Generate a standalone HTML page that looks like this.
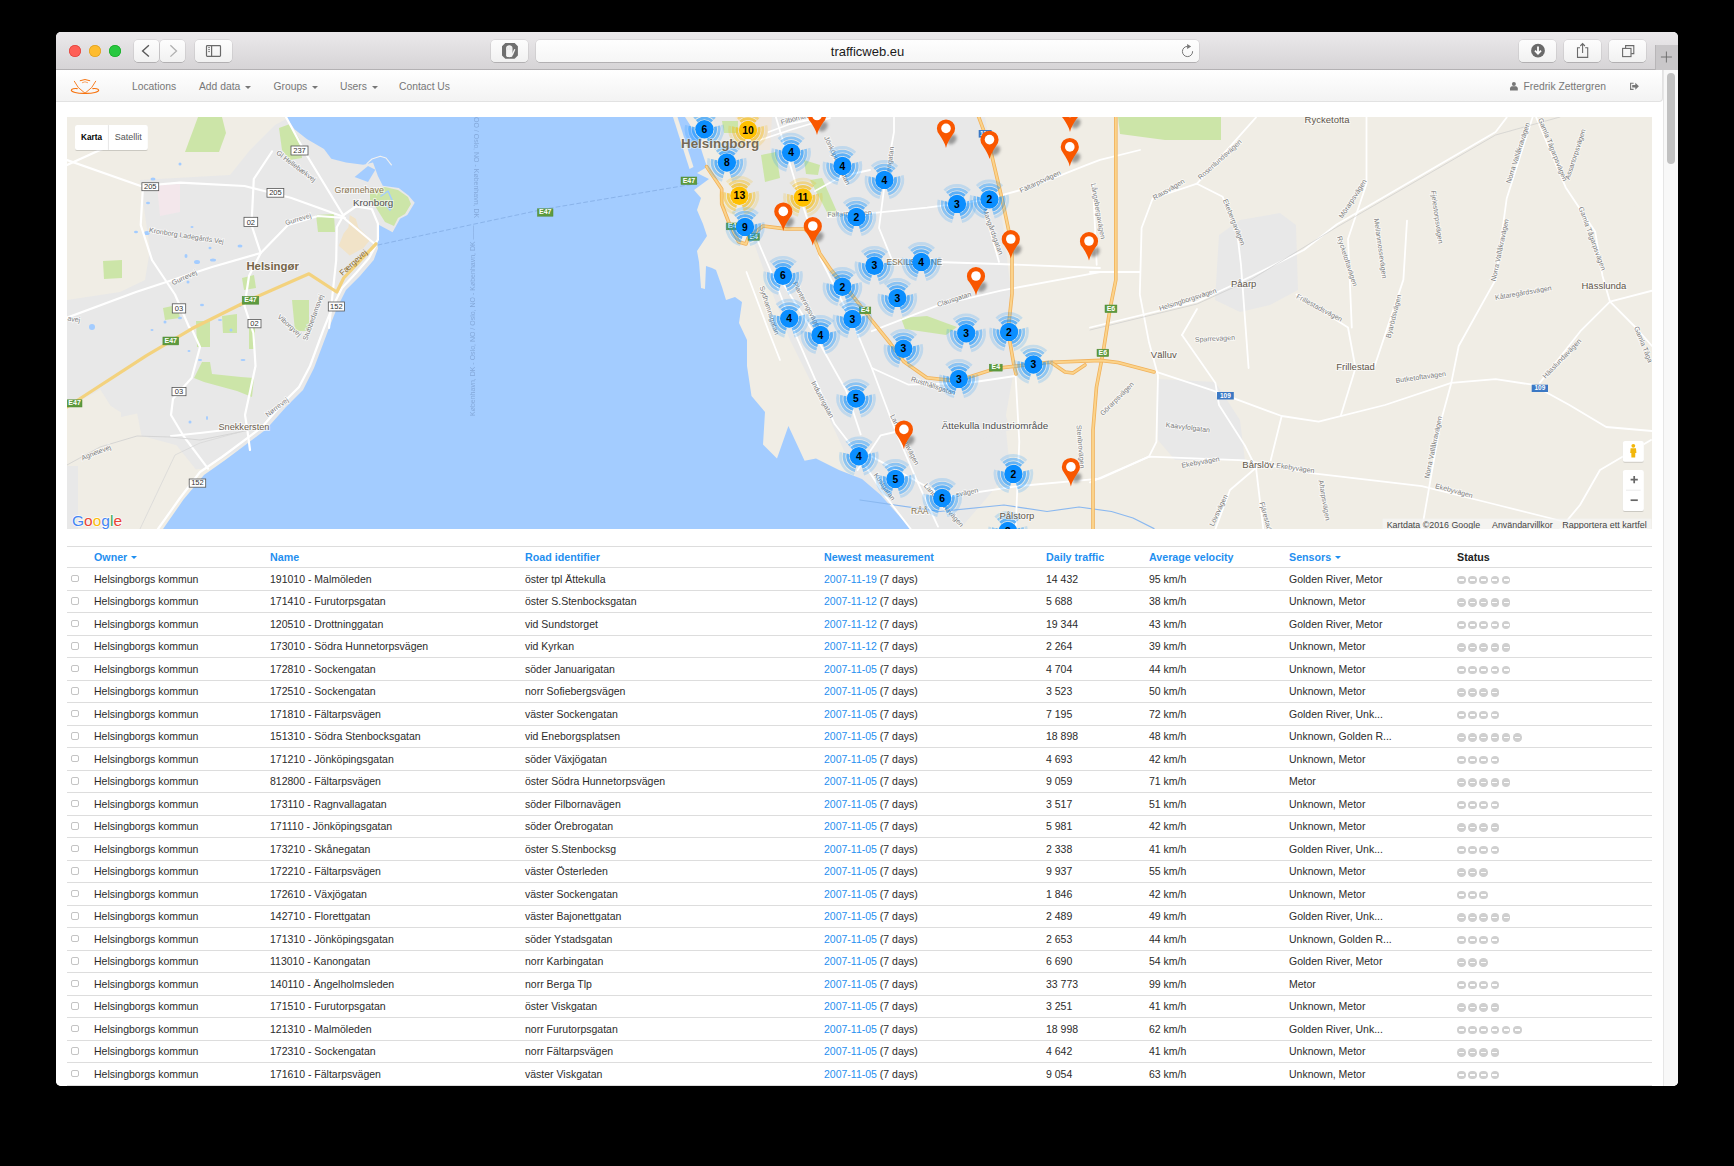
<!DOCTYPE html>
<html><head><meta charset="utf-8"><style>html,body{margin:0;padding:0;background:#000;width:1734px;height:1166px;overflow:hidden;font-family:"Liberation Sans",sans-serif;}
#win{position:absolute;left:56px;top:32px;width:1622px;height:1053.5px;background:#fff;border-radius:5px 5px 5px 5px;overflow:hidden;}
#toolbar{position:absolute;left:0;top:0;width:1622px;height:37.5px;background:linear-gradient(#ebe9eb,#d6d4d6);border-bottom:1px solid #b3b1b3;box-sizing:border-box;}
.tl{position:absolute;top:12.5px;width:12px;height:12px;border-radius:50%;}
.btn{position:absolute;top:7.8px;height:22px;background:linear-gradient(#fdfdfd,#f1f1f1);border-radius:4px;box-shadow:0 0.5px 0.5px rgba(0,0,0,.25),0 0 0 0.5px rgba(0,0,0,.12);box-sizing:border-box;}
#url{position:absolute;left:480px;top:7.8px;width:663px;height:22px;background:linear-gradient(#fefefe,#f6f6f6);border-radius:4px;box-shadow:0 0.5px 0.5px rgba(0,0,0,.25),0 0 0 0.5px rgba(0,0,0,.12);font-size:13px;color:#1a1a1a;text-align:center;line-height:23.6px;}
#newtab{position:absolute;left:1599px;top:13px;width:23px;height:24.5px;background:#c9c7c9;border-left:1px solid #b8b6b8;box-sizing:border-box;}
#content{position:absolute;left:0;top:38px;width:1622px;height:1016px;background:#fff;}
#navbar{position:absolute;left:0;top:0;width:1606.5px;height:31.5px;background:linear-gradient(#fff,#f3f3f3);border:1px solid #e2e2e2;border-top:none;border-left:none;border-radius:0 0 4px 0;box-sizing:border-box;font-size:10.3px;color:#777;}
#navbar .ni{position:absolute;top:11.3px;white-space:nowrap;}
.caretn{display:inline-block;width:0;height:0;border-left:3px solid transparent;border-right:3px solid transparent;border-top:3px solid #777;vertical-align:middle;margin-left:5px;}
#sb{position:absolute;left:1607px;top:0;width:15px;height:1016px;background:#f8f8f8;border-left:1px solid #e6e6e6;box-sizing:border-box;}
#thumb{position:absolute;left:2.8px;top:3px;width:8px;height:90.5px;border-radius:4px;background:#c1c1c1;}
#map{position:absolute;left:11px;top:47px;width:1585px;height:412px;background:#f0ede5;overflow:hidden;}
#map svg{position:absolute;left:0;top:0;}
#table{position:absolute;left:11px;top:0;width:1585px;height:1016px;font-size:10.5px;color:#2b2b2b;}
.thead{position:absolute;left:0;top:475.5px;width:1585px;height:22px;border-top:1px solid #ddd;border-bottom:1px solid #ddd;box-sizing:border-box;}
.tr{position:absolute;left:0;width:1585px;height:22.5px;border-bottom:1px solid #ddd;box-sizing:border-box;}
.c{position:absolute;top:4.7px;white-space:nowrap;}
.h{color:#1f8ff0;font-weight:bold;top:4px;font-size:10.7px;}
.st{color:#222;}
.c1{left:27px}.c2{left:203px}.c3{left:458px}.c4{left:757px}.c5{left:979px}.c6{left:1082px}.c7{left:1222px}.c8{left:1390px}
.c4 a{color:#1f8ff0;}
.cb{position:absolute;left:4px;top:6.6px;width:7.8px;height:7.8px;border:1px solid #c4c4c4;border-radius:2px;box-sizing:border-box;}
.caret{display:inline-block;width:0;height:0;border-left:3px solid transparent;border-right:3px solid transparent;border-top:3px solid #1f8ff0;vertical-align:middle;margin-left:1px;}
.dot{display:inline-block;width:8.6px;height:8.6px;border-radius:50%;background:#cfcfcf;margin-right:2.6px;position:relative;vertical-align:middle;}
.dot:after{content:"";position:absolute;left:1.8px;top:3.6px;width:5px;height:1.4px;background:#fff;}
</style></head>
<body>
<div id="win">
<div id="toolbar">
<div class="tl" style="left:13px;background:#fe5f57;box-shadow:inset 0 0 0 0.7px #e0443e"></div>
<div class="tl" style="left:33px;background:#febc2e;box-shadow:inset 0 0 0 0.7px #dea123"></div>
<div class="tl" style="left:53px;background:#28c840;box-shadow:inset 0 0 0 0.7px #1aab29"></div>
<div class="btn" style="left:78px;width:25px"></div>
<div class="btn" style="left:103.8px;width:25.2px"></div>
<div class="btn" style="left:139px;width:37px"></div>
<div class="btn" style="left:434.7px;width:37.3px"></div>
<div id="url">trafficweb.eu</div>
<div class="btn" style="left:1462.8px;width:37.2px"></div>
<div class="btn" style="left:1507.7px;width:37px"></div>
<div class="btn" style="left:1552.5px;width:37.3px"></div>
<div id="newtab"></div>
<svg style="position:absolute;left:0;top:0" width="1622" height="38" viewBox="56 32 1622 38">
<polyline points="148.9,45.3 142.6,50.9 148.9,56.6" fill="none" stroke="#5a5a5a" stroke-width="1.4"/>
<polyline points="170.4,45.3 176.5,50.9 170.4,56.6" fill="none" stroke="#b0b0b0" stroke-width="1.3"/>
<rect x="206.5" y="45.6" width="14" height="10.8" rx="0.8" fill="none" stroke="#6a6a6a" stroke-width="1.2"/>
<line x1="211.6" y1="45.6" x2="211.6" y2="56.4" stroke="#6a6a6a" stroke-width="1.2"/>
<line x1="208.2" y1="47.6" x2="209.9" y2="47.6" stroke="#6a6a6a" stroke-width="0.9"/>
<line x1="208.2" y1="49.6" x2="209.9" y2="49.6" stroke="#6a6a6a" stroke-width="0.9"/>
<line x1="208.2" y1="51.6" x2="209.9" y2="51.6" stroke="#6a6a6a" stroke-width="0.9"/>
<polygon points="505.3,42.9 514.6,42.9 517.9,46.2 517.9,55.5 514.6,58.8 505.3,58.8 502,55.5 502,46.2" fill="#6f6f6f"/>
<path d="M506.1,56 L506.1,48 C506.1,44.2 512.5,44.2 512.5,48 L512.5,56 C511.8,57.6 506.8,57.6 506.1,56 Z" fill="#f4f4f4"/><path d="M511.6,54.5 L514.2,49 L515.4,49.6 L512.8,55.6 Z" fill="#f4f4f4"/><path d="M507.6,47.2 L507.6,50 M509.3,46.3 L509.3,50 M511,47.2 L511,50" stroke="#d8d8d8" stroke-width="0.5"/>
<circle cx="1538" cy="50.7" r="6.9" fill="#6a6a6a"/>
<path d="M1538,46.5 L1538,53.5 M1535,50.7 L1538,53.8 L1541,50.7" fill="none" stroke="#fff" stroke-width="1.8" stroke-linecap="butt"/>
<path d="M1580,47.8 L1577.5,47.8 L1577.5,57.4 L1587.7,57.4 L1587.7,47.8 L1585.2,47.8" fill="none" stroke="#6a6a6a" stroke-width="1.1"/>
<path d="M1582.6,53 L1582.6,43.8 M1580.3,46 L1582.6,43.6 L1584.9,46" fill="none" stroke="#6a6a6a" stroke-width="1.1"/>
<path d="M1625.6,48 L1625.6,45.6 L1633.8,45.6 L1633.8,53.6 L1631.2,53.6" fill="none" stroke="#6a6a6a" stroke-width="1.1"/>
<rect x="1622.6" y="48.4" width="8.4" height="8.2" fill="none" stroke="#6a6a6a" stroke-width="1.1"/>
<path d="M1666.4,51.5 L1666.4,62.5 M1660.9,57 L1671.9,57" stroke="#6a6a6a" stroke-width="0.9"/>
<path d="M1187.6,46.4 A5.1,5.1 0 1 0 1192.6,51.2" fill="none" stroke="#777" stroke-width="1"/>
<path d="M1187.1,44 L1191.2,46.5 L1187.1,49 Z" fill="#777"/>
</svg>
</div>

<div id="content">
<div id="navbar">
<div class="ni" style="left:76px">Locations</div>
<div class="ni" style="left:143px">Add data<b class="caretn"></b></div>
<div class="ni" style="left:217.5px">Groups<b class="caretn"></b></div>
<div class="ni" style="left:284px">Users<b class="caretn"></b></div>
<div class="ni" style="left:343px">Contact Us</div>
<div class="ni" style="left:1467.5px">Fredrik Zettergren</div>
<svg style="position:absolute;left:0;top:0" width="1606" height="32" viewBox="56 70 1606 32">
<g fill="none" stroke="#f7730e" stroke-linecap="round">
<path d="M85,93.4 C77,93.6 71.2,91.8 71.3,90.3 C71.4,88.9 74.5,88.2 77.2,88.6" stroke-width="1.1"/>
<path d="M85,93.4 C93,93.6 98.8,91.8 98.7,90.3 C98.6,88.9 95.5,88.2 92.8,88.6" stroke-width="1.1"/>
<path d="M74.3,81.3 Q77,88 85,93.2 Q93,88 95.7,81.3" stroke-width="0.9"/>
<path d="M80.2,80.6 Q85,78.3 89.8,80.6" stroke-width="1"/>
<path d="M82.3,82.6 Q85,80.8 87.7,82.6" stroke-width="0.8" opacity="0.8"/>
</g>
<circle cx="1513.9" cy="84.1" r="2" fill="#777"/>
<path d="M1510,90.4 L1510,88.6 C1510,86.8 1511.5,86.3 1512.6,86.3 L1515.2,86.3 C1516.3,86.3 1517.8,86.8 1517.8,88.6 L1517.8,90.4 Z" fill="#777"/>
<path d="M1633.6,83.2 L1630.6,83.2 L1630.6,89.4 L1633.6,89.4" fill="none" stroke="#777" stroke-width="1.1"/>
<path d="M1632.2,85.1 L1635.3,85.1 L1635.3,82.8 L1638.9,86.3 L1635.3,89.8 L1635.3,87.5 L1632.2,87.5 Z" fill="#777"/>
</svg>
</div>
<div id="sb"><div id="thumb"></div></div>

<div id="map"><svg width="1585" height="412" viewBox="0 0 1585 412"><defs><filter id="blur" x="-50%" y="-50%" width="200%" height="200%"><feGaussianBlur stdDeviation="1.5"/></filter><filter id="sh" x="-20%" y="-20%" width="140%" height="150%"><feDropShadow dx="0" dy="0.5" stdDeviation="0.7" flood-color="#000" flood-opacity="0.3"/></filter></defs><g transform="translate(-67,-117)"><polygon points="140,180 230,175 250,150 275,125 290,117 340,117 380,160 420,200 390,245 329,338 303,390 281,420 259,438 233,453 207,468 175,472 150,455 120,440 67,420 67,300 120,292 145,280 150,250" fill="#e8e8e8" />
<polygon points="67,408 100.3,389.4 110.6,405.7 121,412.6 121,416.9 137.2,413.4 141.5,435.7 176.6,445.2 199.8,474.3 215,490 175,529 67,529" fill="#f0ede5" />
<polygon points="67,466 78,466 78,529 67,529" fill="#e8e8e8" />
<polygon points="712,117 985,117 1000,200 1012,300 1014,370 1005,420 1010,470 985,500 960,529 880,529 830,420 790,340 760,260 735,190" fill="#e8e8e8" />
<polygon points="960,395 1000,395 1010,430 980,440 955,420" fill="#e8e8e8" />
<polygon points="735,117 772,117 770,150 745,150" fill="#efe6dc" />
<polygon points="1219,235 1240,220 1280,213 1296,225 1298,290 1270,305 1240,312 1215,300" fill="#e8e8e8" />
<polygon points="1158,379 1215,382 1240,420 1245,460 1175,460 1158,440" fill="#e8e8e8" />
<polygon points="972,383 1004,383 1004,419 972,419" fill="#e8e8e8" />
<polygon points="961,441 1004,441 1004,484 961,484" fill="#e8e8e8" />
<polygon points="1570,160 1640,150 1652,200 1600,220 1570,200" fill="#f0ede5" />
<polygon points="198,117 222,117 226,133 219,152 185,152" fill="#cce5a8" />
<polygon points="279,128 290,124 300,140 302,158 290,160 282,150" fill="#cce5a8" />
<polygon points="370,190 385,187 398,190 408,197 411,204 405,214 398,218 394,226 385,222 375,206 370,200" fill="#cce5a8" />
<polygon points="316,215 334,214 335,232 318,232" fill="#cce5a8" />
<polygon points="103,261 122,260 122,278 104,279" fill="#cce5a8" />
<polygon points="196,321 210,321 210,347 197,347" fill="#cce5a8" />
<polygon points="222,316 237,314 237,333 223,333" fill="#cce5a8" />
<polygon points="249,327 255,327 255,349 249,349" fill="#cce5a8" />
<polygon points="202,362 210,362 212,374 241,377 254,378 252,397 237,391 204,382 194,378" fill="#cce5a8" />
<polygon points="292,300 309,300 309,331 295,331" fill="#cce5a8" />
<polygon points="163,308 177,305 180,318 165,320" fill="#cce5a8" />
<polygon points="242,278 254,275 256,288 244,290" fill="#cce5a8" />
<ellipse cx="180" cy="164" rx="1.5" ry="1.5" fill="#a3ccff"/>
<ellipse cx="153" cy="179" rx="2.5" ry="1.5" fill="#a3ccff"/>
<ellipse cx="148" cy="203" rx="2" ry="1.2" fill="#a3ccff"/>
<ellipse cx="147" cy="233" rx="2.8" ry="2" fill="#a3ccff"/>
<ellipse cx="136" cy="232" rx="2" ry="1.2" fill="#a3ccff"/>
<ellipse cx="192" cy="227" rx="1.5" ry="1" fill="#a3ccff"/>
<ellipse cx="197" cy="262" rx="3" ry="2" fill="#a3ccff"/>
<ellipse cx="186" cy="256" rx="1.5" ry="2" fill="#a3ccff"/>
<ellipse cx="210" cy="248" rx="1.5" ry="1.2" fill="#a3ccff"/>
<ellipse cx="240" cy="246" rx="2.5" ry="1.5" fill="#a3ccff"/>
<ellipse cx="213" cy="260" rx="3" ry="1.5" fill="#a3ccff"/>
<ellipse cx="188" cy="282" rx="1.5" ry="1.5" fill="#a3ccff"/>
<ellipse cx="240" cy="306" rx="1.5" ry="1" fill="#a3ccff"/>
<ellipse cx="202" cy="305" rx="2" ry="1.3" fill="#a3ccff"/>
<ellipse cx="180" cy="318" rx="2" ry="1.3" fill="#a3ccff"/>
<ellipse cx="165" cy="322" rx="1.5" ry="1.5" fill="#a3ccff"/>
<ellipse cx="152" cy="330" rx="1.5" ry="1" fill="#a3ccff"/>
<ellipse cx="92" cy="327" rx="3" ry="3" fill="#a3ccff"/>
<ellipse cx="207" cy="418" rx="1" ry="2" fill="#a3ccff"/>
<ellipse cx="190" cy="422" rx="1.5" ry="1.5" fill="#a3ccff"/>
<ellipse cx="231" cy="330" rx="1.5" ry="1.5" fill="#a3ccff"/>
<ellipse cx="220" cy="320" rx="2" ry="1" fill="#a3ccff"/>
<ellipse cx="243" cy="360" rx="2.5" ry="1" fill="#a3ccff"/>
<ellipse cx="189" cy="351" rx="1.5" ry="1" fill="#a3ccff"/>
<ellipse cx="200" cy="360" rx="2" ry="1" fill="#a3ccff"/>
<polygon points="349.7,215 355.8,218.8 358.3,227.3 365.6,234.7 370.5,239.6 363.2,248.2 349.7,255.6 338.7,245.7 343.6,233.5 348.5,227.3" fill="#f1e3c8" />
<polygon points="157,185 180,184 180,212 160,216" fill="#f3e7eb" />
<polygon points="761,155 776,152 780,178 765,182" fill="#cce5a8" />
<polygon points="804,160 820,165 818,175 806,174" fill="#cce5a8" />
<polygon points="810,180 822,178 838,214 830,218" fill="#cce5a8" />
<polygon points="722,121 738,121 738,133 724,133" fill="#cce5a8" />
<polygon points="1118,117 1221,117 1221,140 1165,140 1120,134" fill="#cce5a8" />
<polygon points="901,318 927,316 957,327 946,335 905,329" fill="#cce5a8" />
<polygon points="286,117 294.5,129.3 306.8,139 324,148.9 331.3,158.7 346,162.4 363.2,164.8 373,162.4 377.9,175.9 382.8,185.7 398.7,188.1 408.5,195.5 414.7,202.8 407.3,215.1 400,218.8 392.6,232.3 379.1,224.9 379.1,237.2 376.7,240.8 378,248.4 373.7,260 360,276 346,290 337,308 328.7,329 314,368 303,390 286,407 266,429.6 224.6,460.5 204,475 183.5,499.6 163,529 910.7,529 880.7,495 862,479 839,470 816,458.4 804.6,460.7 788.4,426 777,458.4 763,444.6 765,412 751.5,396 747,366 747,340 739,323 742,302 735,297 726,300 722,287 716,270 712,268 706,266 705,289 701,288 699,262 697,251 707,236 703,224 697,210 701,198 694,190 709,179 697,173 707,167 703,155 697,136 685,117" fill="#a3ccff" />
<polygon points="673,117 677.5,117 693.5,167 689.5,169" fill="#f0ede5" />
<polygon points="354.6,177 368,166 375.4,169.7 368,182" fill="#a3ccff" />
<polyline points="366.9,163.6 372,159 380.3,156.2 386,158 391.4,164.8" fill="none" stroke="#f0f0f0" stroke-width="1.2" stroke-linejoin="round" stroke-linecap="round" />
<polyline points="381,196 388,191 392,200 390,210 386,205" fill="none" stroke="#a3ccff" stroke-width="1.5" stroke-linejoin="round" stroke-linecap="round" />
<polyline points="378,245 470,225 545,209 700,183" fill="none" stroke="#7fa8e0" stroke-width="1" stroke-linejoin="round" stroke-linecap="round" stroke-dasharray="4,3" opacity="0.7"/>
<polyline points="67,160 140.7,186 180,182.7 244.5,186 290.7,197.7 341.4,216 376,245" fill="none" stroke="#ffffff" stroke-width="2.2" stroke-linejoin="round" stroke-linecap="round" />
<polyline points="143,186 140.7,225 152,260 175,294.5 189,327 191.7,328.8 200,347 191.7,378 173,398.8 171,415 183.5,436 208,468.7" fill="none" stroke="#ffffff" stroke-width="2.2" stroke-linejoin="round" stroke-linecap="round" />
<polyline points="272,151.5 253.8,179 251.5,225 260.7,253 249,276 244.5,306 253.4,333 255.5,366 245,415 247,427.6 250,450" fill="none" stroke="#ffffff" stroke-width="2.2" stroke-linejoin="round" stroke-linecap="round" />
<polyline points="67,317.6 136,292 212,267 260.7,253 288,225 318,216 345,218" fill="none" stroke="#ffffff" stroke-width="2.2" stroke-linejoin="round" stroke-linecap="round" />
<polyline points="286,117 304.5,151.5 343.7,216" fill="none" stroke="#ffffff" stroke-width="2.2" stroke-linejoin="round" stroke-linecap="round" />
<polyline points="329,328 333,290 336.2,260 336.8,227.3 343.6,215 355.8,206.5 371.8,209 377.9,223.7 377.9,239.6 370.5,251.9" fill="none" stroke="#ffffff" stroke-width="2.2" stroke-linejoin="round" stroke-linecap="round" />
<polyline points="158,529 180,498 200,472 222,457 262,427 282,404 299,387 310,366 324,328 333,306 342,288 356,273 369,258 376,245" fill="none" stroke="#ffffff" stroke-width="2.2" stroke-linejoin="round" stroke-linecap="round" />
<polyline points="67,165 100,150 130,140" fill="none" stroke="#ffffff" stroke-width="2.2" stroke-linejoin="round" stroke-linecap="round" />
<polyline points="171,436 200,433 250,427" fill="none" stroke="#ffffff" stroke-width="2.2" stroke-linejoin="round" stroke-linecap="round" />
<polyline points="860,500 940,511.5 1004,505 1047,511.5 1079,507 1111.5,511.5 1133,518 1154,528.6" fill="none" stroke="#8ab8f0" stroke-width="1.2" stroke-linejoin="round" stroke-linecap="round" />
<polyline points="67,465 100,447 137,436 170,437 200,440 260,428" fill="none" stroke="#cfcfcf" stroke-width="0.8" stroke-linejoin="round" stroke-linecap="round" />
<polyline points="140,529 175,455 200,443 240,432" fill="none" stroke="#d5d5d5" stroke-width="0.7" stroke-linejoin="round" stroke-linecap="round" />
<polyline points="67.2,407 146.4,355.6 191.7,328.8 251.5,299 309,273.8 336.8,292 343.7,278 376,243.8" fill="none" stroke="#f3d27e" stroke-width="3.2" stroke-linejoin="round" stroke-linecap="round" />
<polyline points="827.6,217 871.8,213.2 927,207.7 982.4,200.3 1030.3,187.4 1085.6,165.3 1100,159.8 1140,150" fill="none" stroke="#ffffff" stroke-width="1.8" stroke-linejoin="round" stroke-linecap="round" />
<polyline points="768.6,132 790,124 820,117.4" fill="none" stroke="#ffffff" stroke-width="1.8" stroke-linejoin="round" stroke-linecap="round" />
<polyline points="815,191 842,176 870,170" fill="none" stroke="#ffffff" stroke-width="1.8" stroke-linejoin="round" stroke-linecap="round" />
<polyline points="936,262 999,264 1100,268" fill="none" stroke="#ffffff" stroke-width="1.8" stroke-linejoin="round" stroke-linecap="round" />
<polyline points="982,205 990,230 999,262" fill="none" stroke="#ffffff" stroke-width="1.8" stroke-linejoin="round" stroke-linecap="round" />
<polyline points="760,140 790,130 830,118" fill="none" stroke="#ffffff" stroke-width="1.8" stroke-linejoin="round" stroke-linecap="round" />
<polyline points="894,117 894,132 884.7,183.7 879,228 894,264.8" fill="none" stroke="#ffffff" stroke-width="1.8" stroke-linejoin="round" stroke-linecap="round" />
<polyline points="871.8,331.2 938,305.4 1000.8,290.6 1100,272.2 1139.8,272" fill="none" stroke="#ffffff" stroke-width="1.8" stroke-linejoin="round" stroke-linecap="round" />
<polyline points="871.8,368 908.7,384.7 968,383 1015,376" fill="none" stroke="#ffffff" stroke-width="1.8" stroke-linejoin="round" stroke-linecap="round" />
<polyline points="871.8,456.6 945.5,497 1019.3,486 1100,478.7 1149,456.6" fill="none" stroke="#ffffff" stroke-width="1.8" stroke-linejoin="round" stroke-linecap="round" />
<polyline points="776,117.4 798,191 820,257.5 853.4,323.8 871.8,368 894,427 916,478.7 938,526.6" fill="none" stroke="#ffffff" stroke-width="1.8" stroke-linejoin="round" stroke-linecap="round" />
<polyline points="753.8,231.7 776,283.3 795.3,333.8 834.5,423.8 857.6,453.8 883,493 910.7,529" fill="none" stroke="#ffffff" stroke-width="1.8" stroke-linejoin="round" stroke-linecap="round" />
<polyline points="776,272 812.8,331.2 846,390.2 860.7,434.4" fill="none" stroke="#ffffff" stroke-width="1.8" stroke-linejoin="round" stroke-linecap="round" />
<polyline points="1015.6,375.4 1019.3,441.8 1015.6,529" fill="none" stroke="#ffffff" stroke-width="1.8" stroke-linejoin="round" stroke-linecap="round" />
<polyline points="746.5,272 768.6,331 780,360" fill="none" stroke="#ffffff" stroke-width="1.8" stroke-linejoin="round" stroke-linecap="round" />
<polyline points="857.6,470 880.7,435.3 895,432" fill="none" stroke="#ffffff" stroke-width="1.8" stroke-linejoin="round" stroke-linecap="round" />
<polyline points="1093,183.7 1096.7,264.8" fill="none" stroke="#ffffff" stroke-width="1.8" stroke-linejoin="round" stroke-linecap="round" />
<polyline points="1197,183.7 1152.7,198.5 1141.6,228 1139.8,294.4 1149,342.3 1158,375.5 1156.4,441.9 1149,456.6" fill="none" stroke="#ffffff" stroke-width="1.8" stroke-linejoin="round" stroke-linecap="round" />
<polyline points="1197,183.7 1256,117.4" fill="none" stroke="#ffffff" stroke-width="1.8" stroke-linejoin="round" stroke-linecap="round" />
<polyline points="1197,183.7 1222.7,196.7 1237.5,235.4 1241,265 1248.6,368" fill="none" stroke="#ffffff" stroke-width="1.8" stroke-linejoin="round" stroke-linecap="round" />
<polyline points="1090,327.5 1197,301.7 1252,276 1303.9,250 1337,224.3 1495.6,132 1506.7,117.4" fill="none" stroke="#ffffff" stroke-width="1.8" stroke-linejoin="round" stroke-linecap="round" />
<polyline points="1182,335 1215.4,382.9 1219,405 1244.9,445.5 1256,467.7" fill="none" stroke="#ffffff" stroke-width="1.8" stroke-linejoin="round" stroke-linecap="round" />
<polyline points="1182,335 1197,309" fill="none" stroke="#ffffff" stroke-width="1.8" stroke-linejoin="round" stroke-linecap="round" />
<polyline points="1156.4,371.8 1211.7,390.2 1281.7,416 1318.6,421.6 1385,405 1451.3,382.9 1495.6,379.2 1532.5,384.7 1569.4,405 1606.2,427 1652,431" fill="none" stroke="#ffffff" stroke-width="1.8" stroke-linejoin="round" stroke-linecap="round" />
<polyline points="1090,482.4 1149,456.6 1244.9,460.3 1311.2,473.2 1421.9,486.1 1495.6,504.5 1569.4,523 1590,529" fill="none" stroke="#ffffff" stroke-width="1.8" stroke-linejoin="round" stroke-linecap="round" />
<polyline points="1532.5,117.4 1506.7,198.5 1495.6,279.6 1458.7,346 1451.3,382.9 1440.3,423.4 1421.9,529" fill="none" stroke="#ffffff" stroke-width="1.8" stroke-linejoin="round" stroke-linecap="round" />
<polyline points="1536.2,117.4 1565.7,187.4 1595.2,231.7 1602.5,276 1610,301.7 1652,290.7" fill="none" stroke="#ffffff" stroke-width="1.8" stroke-linejoin="round" stroke-linecap="round" />
<polyline points="1610,301.7 1635.7,327.5 1652,346" fill="none" stroke="#ffffff" stroke-width="1.8" stroke-linejoin="round" stroke-linecap="round" />
<polyline points="1610,301.7 1580.4,331.2 1539.8,382.9" fill="none" stroke="#ffffff" stroke-width="1.8" stroke-linejoin="round" stroke-linecap="round" />
<polyline points="1296.5,294.4 1348,327.5 1355.5,368 1340.7,416" fill="none" stroke="#ffffff" stroke-width="1.8" stroke-linejoin="round" stroke-linecap="round" />
<polyline points="1366.5,117.4 1366.5,183.7 1348,239 1351.8,327.5" fill="none" stroke="#ffffff" stroke-width="1.8" stroke-linejoin="round" stroke-linecap="round" />
<polyline points="1407,220.6 1403.4,279.6 1374,368" fill="none" stroke="#ffffff" stroke-width="1.8" stroke-linejoin="round" stroke-linecap="round" />
<polyline points="1256,467.7 1230,490 1215.4,529" fill="none" stroke="#ffffff" stroke-width="1.8" stroke-linejoin="round" stroke-linecap="round" />
<polyline points="1256,467.7 1263.3,529" fill="none" stroke="#ffffff" stroke-width="1.8" stroke-linejoin="round" stroke-linecap="round" />
<polyline points="1281.7,416 1270.7,460.3" fill="none" stroke="#ffffff" stroke-width="1.8" stroke-linejoin="round" stroke-linecap="round" />
<polyline points="1090,272 1139.8,272" fill="none" stroke="#ffffff" stroke-width="1.8" stroke-linejoin="round" stroke-linecap="round" />
<polyline points="1651,440 1600,470 1580,505 1560,529" fill="none" stroke="#ffffff" stroke-width="1.8" stroke-linejoin="round" stroke-linecap="round" />
<polyline points="1090,330 1197,304 1252,279 1337,227 1495.6,135 1560,117" fill="none" stroke="#c8c8c8" stroke-width="0.6" stroke-linejoin="round" stroke-linecap="round" />
<polyline points="978.7,117 989.8,147 1002.7,202 1012,246 1012,294 1008,331 1014,365.7 1016,374" fill="none" stroke="#f1b15a" stroke-width="3.6" stroke-linejoin="round" stroke-linecap="round" />
<polyline points="978.7,117 989.8,147 1002.7,202 1012,246 1012,294 1008,331 1014,365.7 1016,374" fill="none" stroke="#fbd38b" stroke-width="2.0" stroke-linejoin="round" stroke-linecap="round" />
<polyline points="1115.8,117 1115.8,280 1110,309 1103,353 1096.5,387 1093,430 1093,529" fill="none" stroke="#f1b15a" stroke-width="3.6" stroke-linejoin="round" stroke-linecap="round" />
<polyline points="1115.8,117 1115.8,280 1110,309 1103,353 1096.5,387 1093,430 1093,529" fill="none" stroke="#fbd38b" stroke-width="2.0" stroke-linejoin="round" stroke-linecap="round" />
<polyline points="706.6,166.6 721.7,189 721.7,204 729,223 738.7,242 746,244 748,238 763,226 785.8,228.9 804.7,229 814,238 819.8,253.4 831,270 852,295 871.5,320 890,343 903.7,361.5 926.8,377.7 956.8,381 996,368.4 1016.8,366 1047,362.5 1100.8,360.4 1118,362.5 1154,372" fill="none" stroke="#f1b15a" stroke-width="3.6" stroke-linejoin="round" stroke-linecap="round" />
<polyline points="706.6,166.6 721.7,189 721.7,204 729,223 738.7,242 746,244 748,238 763,226 785.8,228.9 804.7,229 814,238 819.8,253.4 831,270 852,295 871.5,320 890,343 903.7,361.5 926.8,377.7 956.8,381 996,368.4 1016.8,366 1047,362.5 1100.8,360.4 1118,362.5 1154,372" fill="none" stroke="#fbd38b" stroke-width="2.0" stroke-linejoin="round" stroke-linecap="round" />
<polyline points="1052,363 1065,372 1073,373 1085,365" fill="none" stroke="#f1b15a" stroke-width="3.6" stroke-linejoin="round" stroke-linecap="round" />
<polyline points="1052,363 1065,372 1073,373 1085,365" fill="none" stroke="#fbd38b" stroke-width="2.0" stroke-linejoin="round" stroke-linecap="round" /><rect x="141.9" y="182.7" width="16.799999999999983" height="8.0" fill="#fff" stroke="#555" stroke-width="0.8"/>
<text x="150.3" y="188.7" font-family="Liberation Sans" font-size="7.5" fill="#333" text-anchor="middle">205</text>
<rect x="267" y="188.4" width="16.80000000000001" height="8.799999999999983" fill="#fff" stroke="#555" stroke-width="0.8"/>
<text x="275.4" y="195.2" font-family="Liberation Sans" font-size="7.5" fill="#333" text-anchor="middle">205</text>
<rect x="244" y="217.3" width="13.699999999999989" height="9.199999999999989" fill="#fff" stroke="#555" stroke-width="0.8"/>
<text x="250.85" y="224.5" font-family="Liberation Sans" font-size="7.5" fill="#333" text-anchor="middle">02</text>
<rect x="291" y="146" width="17" height="9" fill="#fff" stroke="#555" stroke-width="0.8"/>
<text x="299.5" y="153" font-family="Liberation Sans" font-size="7.5" fill="#333" text-anchor="middle">237</text>
<rect x="172.3" y="303.8" width="13.399999999999977" height="9.199999999999989" fill="#fff" stroke="#555" stroke-width="0.8"/>
<text x="179.0" y="311" font-family="Liberation Sans" font-size="7.5" fill="#333" text-anchor="middle">03</text>
<rect x="328.3" y="302" width="16.099999999999966" height="9" fill="#fff" stroke="#555" stroke-width="0.8"/>
<text x="336.35" y="309" font-family="Liberation Sans" font-size="7.5" fill="#333" text-anchor="middle">152</text>
<rect x="248" y="319.5" width="13" height="8.300000000000011" fill="#fff" stroke="#555" stroke-width="0.8"/>
<text x="254.5" y="325.8" font-family="Liberation Sans" font-size="7.5" fill="#333" text-anchor="middle">02</text>
<rect x="172" y="387.4" width="14" height="8.300000000000011" fill="#fff" stroke="#555" stroke-width="0.8"/>
<text x="179.0" y="393.7" font-family="Liberation Sans" font-size="7.5" fill="#333" text-anchor="middle">03</text>
<rect x="189.2" y="479" width="16.5" height="8.199999999999989" fill="#fff" stroke="#555" stroke-width="0.8"/>
<text x="197.45" y="485.2" font-family="Liberation Sans" font-size="7.5" fill="#333" text-anchor="middle">152</text>
<rect x="242.2" y="296.4" width="16.600000000000023" height="7.800000000000011" fill="#5d9a3e" stroke="#4f8a33" stroke-width="0.5"/>
<text x="250.5" y="302.4" font-family="Liberation Sans" font-weight="bold" font-size="7" fill="#fff" text-anchor="middle">E47</text>
<rect x="162.9" y="337" width="15.799999999999983" height="7.899999999999977" fill="#5d9a3e" stroke="#4f8a33" stroke-width="0.5"/>
<text x="170.8" y="343.09999999999997" font-family="Liberation Sans" font-weight="bold" font-size="7" fill="#fff" text-anchor="middle">E47</text>
<rect x="67.2" y="399.8" width="14.799999999999997" height="7.199999999999989" fill="#5d9a3e" stroke="#4f8a33" stroke-width="0.5"/>
<text x="74.6" y="405.2" font-family="Liberation Sans" font-weight="bold" font-size="7" fill="#fff" text-anchor="middle">E47</text>
<rect x="537.5" y="208.8" width="15.5" height="7.399999999999977" fill="#5d9a3e" stroke="#4f8a33" stroke-width="0.5"/>
<text x="545.25" y="214.39999999999998" font-family="Liberation Sans" font-weight="bold" font-size="7" fill="#fff" text-anchor="middle">E47</text>
<rect x="681" y="177" width="15.799999999999955" height="7.5" fill="#5d9a3e" stroke="#4f8a33" stroke-width="0.5"/>
<text x="688.9" y="182.7" font-family="Liberation Sans" font-weight="bold" font-size="7" fill="#fff" text-anchor="middle">E47</text>
<rect x="859.4" y="307" width="11.399999999999977" height="6.800000000000011" fill="#5d9a3e" stroke="#4f8a33" stroke-width="0.5"/>
<text x="865.0999999999999" y="312.0" font-family="Liberation Sans" font-weight="bold" font-size="7" fill="#fff" text-anchor="middle">E4</text>
<rect x="726.4" y="223" width="11.600000000000023" height="6.800000000000011" fill="#5d9a3e" stroke="#4f8a33" stroke-width="0.5"/>
<text x="732.2" y="228.0" font-family="Liberation Sans" font-weight="bold" font-size="7" fill="#fff" text-anchor="middle">E4</text>
<rect x="748" y="233.6" width="11.399999999999977" height="6.700000000000017" fill="#5d9a3e" stroke="#4f8a33" stroke-width="0.5"/>
<text x="753.7" y="238.5" font-family="Liberation Sans" font-weight="bold" font-size="7" fill="#fff" text-anchor="middle">E4</text>
<rect x="989.3" y="364.2" width="12.900000000000091" height="6.900000000000034" fill="#5d9a3e" stroke="#4f8a33" stroke-width="0.5"/>
<text x="995.75" y="369.3" font-family="Liberation Sans" font-weight="bold" font-size="7" fill="#fff" text-anchor="middle">E4</text>
<rect x="1105" y="305" width="11.900000000000091" height="7.600000000000023" fill="#5d9a3e" stroke="#4f8a33" stroke-width="0.5"/>
<text x="1110.95" y="310.8" font-family="Liberation Sans" font-weight="bold" font-size="7" fill="#fff" text-anchor="middle">E6</text>
<rect x="1097" y="349.2" width="11.700000000000045" height="7.300000000000011" fill="#5d9a3e" stroke="#4f8a33" stroke-width="0.5"/>
<text x="1102.85" y="354.7" font-family="Liberation Sans" font-weight="bold" font-size="7" fill="#fff" text-anchor="middle">E6</text>
<rect x="1217" y="392" width="16.799999999999955" height="7.5" fill="#3b78c4"/>
<text x="1225.4" y="397.7" font-family="Liberation Sans" font-weight="bold" font-size="6.5" fill="#fff" text-anchor="middle">109</text>
<rect x="1531.7" y="384.7" width="16.299999999999955" height="7.300000000000011" fill="#3b78c4"/>
<text x="1539.85" y="390.2" font-family="Liberation Sans" font-weight="bold" font-size="6.5" fill="#fff" text-anchor="middle">109</text>
<rect x="978.7" y="130" width="12.899999999999977" height="7.599999999999994" fill="#3b78c4"/>
<text x="985.1500000000001" y="135.79999999999998" font-family="Liberation Sans" font-weight="bold" font-size="6.5" fill="#fff" text-anchor="middle">111</text>
<text x="1200.6" y="180" font-family="Liberation Sans" font-size="7" fill="#7b7b7b" stroke="#fff" stroke-width="1.6" paint-order="stroke" stroke-opacity="0.7" transform="rotate(-42 1200.6 180)">Rosenlundsvägen</text>
<text x="1154.5" y="200.3" font-family="Liberation Sans" font-size="7" fill="#7b7b7b" stroke="#fff" stroke-width="1.6" paint-order="stroke" stroke-opacity="0.7" transform="rotate(-30 1154.5 200.3)">Rausvägen</text>
<text x="1222.7" y="200.3" font-family="Liberation Sans" font-size="7" fill="#7b7b7b" stroke="#fff" stroke-width="1.6" paint-order="stroke" stroke-opacity="0.7" transform="rotate(68 1222.7 200.3)">Ekebergavägen</text>
<text x="1160" y="311" font-family="Liberation Sans" font-size="7" fill="#7b7b7b" stroke="#fff" stroke-width="1.6" paint-order="stroke" stroke-opacity="0.7" transform="rotate(-18 1160 311)">Helsingborgsvägen</text>
<text x="1342.6" y="218.8" font-family="Liberation Sans" font-size="7" fill="#7b7b7b" stroke="#fff" stroke-width="1.6" paint-order="stroke" stroke-opacity="0.7" transform="rotate(-57 1342.6 218.8)">Mörarpsvägen</text>
<text x="1337" y="237" font-family="Liberation Sans" font-size="7" fill="#7b7b7b" stroke="#fff" stroke-width="1.6" paint-order="stroke" stroke-opacity="0.7" transform="rotate(72 1337 237)">Rycketoftavägen</text>
<text x="1374" y="218.8" font-family="Liberation Sans" font-size="7" fill="#7b7b7b" stroke="#fff" stroke-width="1.6" paint-order="stroke" stroke-opacity="0.7" transform="rotate(82 1374 218.8)">Mellanmossevägen</text>
<text x="1431" y="191" font-family="Liberation Sans" font-size="7" fill="#7b7b7b" stroke="#fff" stroke-width="1.6" paint-order="stroke" stroke-opacity="0.7" transform="rotate(82 1431 191)">Fjelestorpsvägen</text>
<text x="1510.4" y="183.7" font-family="Liberation Sans" font-size="7" fill="#7b7b7b" stroke="#fff" stroke-width="1.6" paint-order="stroke" stroke-opacity="0.7" transform="rotate(-72 1510.4 183.7)">Norra Vallåkravägen</text>
<text x="1495.6" y="281.5" font-family="Liberation Sans" font-size="7" fill="#7b7b7b" stroke="#fff" stroke-width="1.6" paint-order="stroke" stroke-opacity="0.7" transform="rotate(-78 1495.6 281.5)">Norra Vallåkravägen</text>
<text x="1538" y="119.2" font-family="Liberation Sans" font-size="7" fill="#7b7b7b" stroke="#fff" stroke-width="1.6" paint-order="stroke" stroke-opacity="0.7" transform="rotate(68 1538 119.2)">Gamla Tågarpsvägen</text>
<text x="1569.4" y="180" font-family="Liberation Sans" font-size="7" fill="#7b7b7b" stroke="#fff" stroke-width="1.6" paint-order="stroke" stroke-opacity="0.7" transform="rotate(-72 1569.4 180)">Assartorpsvägen</text>
<text x="1578.6" y="207.7" font-family="Liberation Sans" font-size="7" fill="#7b7b7b" stroke="#fff" stroke-width="1.6" paint-order="stroke" stroke-opacity="0.7" transform="rotate(70 1578.6 207.7)">Gamla Tågarpsvägen</text>
<text x="1495.6" y="300" font-family="Liberation Sans" font-size="7" fill="#7b7b7b" stroke="#fff" stroke-width="1.6" paint-order="stroke" stroke-opacity="0.7" transform="rotate(-10 1495.6 300)">Kåtaregårdsvägen</text>
<text x="1545.4" y="379" font-family="Liberation Sans" font-size="7" fill="#7b7b7b" stroke="#fff" stroke-width="1.6" paint-order="stroke" stroke-opacity="0.7" transform="rotate(-46 1545.4 379)">Hässlundavägen</text>
<text x="1634" y="327.5" font-family="Liberation Sans" font-size="7" fill="#7b7b7b" stroke="#fff" stroke-width="1.6" paint-order="stroke" stroke-opacity="0.7" transform="rotate(68 1634 327.5)">Gamla Tåga</text>
<text x="1295.8" y="298" font-family="Liberation Sans" font-size="7" fill="#7b7b7b" stroke="#fff" stroke-width="1.6" paint-order="stroke" stroke-opacity="0.7" transform="rotate(28 1295.8 298)">Frillestadsvägen</text>
<text x="1390.5" y="338.6" font-family="Liberation Sans" font-size="7" fill="#7b7b7b" stroke="#fff" stroke-width="1.6" paint-order="stroke" stroke-opacity="0.7" transform="rotate(-76 1390.5 338.6)">Byarödsvägen</text>
<text x="1195" y="342" font-family="Liberation Sans" font-size="7" fill="#7b7b7b" stroke="#fff" stroke-width="1.6" paint-order="stroke" stroke-opacity="0.7" transform="rotate(-3 1195 342)">Sparrevägen</text>
<text x="1396" y="382.9" font-family="Liberation Sans" font-size="7" fill="#7b7b7b" stroke="#fff" stroke-width="1.6" paint-order="stroke" stroke-opacity="0.7" transform="rotate(-8 1396 382.9)">Butketoftavägen</text>
<text x="1103" y="416" font-family="Liberation Sans" font-size="7" fill="#7b7b7b" stroke="#fff" stroke-width="1.6" paint-order="stroke" stroke-opacity="0.7" transform="rotate(-45 1103 416)">Görarpsvägen</text>
<text x="1165.6" y="427" font-family="Liberation Sans" font-size="7" fill="#7b7b7b" stroke="#fff" stroke-width="1.6" paint-order="stroke" stroke-opacity="0.7" transform="rotate(7 1165.6 427)">Kaavyfolgatan</text>
<text x="1182" y="467.7" font-family="Liberation Sans" font-size="7" fill="#7b7b7b" stroke="#fff" stroke-width="1.6" paint-order="stroke" stroke-opacity="0.7" transform="rotate(-10 1182 467.7)">Ekebyvägen</text>
<text x="1276" y="467.7" font-family="Liberation Sans" font-size="7" fill="#7b7b7b" stroke="#fff" stroke-width="1.6" paint-order="stroke" stroke-opacity="0.7" transform="rotate(8 1276 467.7)">Ekebyvägen</text>
<text x="1434.8" y="488" font-family="Liberation Sans" font-size="7" fill="#7b7b7b" stroke="#fff" stroke-width="1.6" paint-order="stroke" stroke-opacity="0.7" transform="rotate(15 1434.8 488)">Ekebyvägen</text>
<text x="1429" y="478.7" font-family="Liberation Sans" font-size="7" fill="#7b7b7b" stroke="#fff" stroke-width="1.6" paint-order="stroke" stroke-opacity="0.7" transform="rotate(-78 1429 478.7)">Norra Vallåkravägen</text>
<text x="1318.6" y="480.6" font-family="Liberation Sans" font-size="7" fill="#7b7b7b" stroke="#fff" stroke-width="1.6" paint-order="stroke" stroke-opacity="0.7" transform="rotate(80 1318.6 480.6)">Altarpsvägen</text>
<text x="1259.6" y="502.7" font-family="Liberation Sans" font-size="7" fill="#7b7b7b" stroke="#fff" stroke-width="1.6" paint-order="stroke" stroke-opacity="0.7" transform="rotate(75 1259.6 502.7)">Fjärestad</text>
<text x="1213.5" y="526.7" font-family="Liberation Sans" font-size="7" fill="#7b7b7b" stroke="#fff" stroke-width="1.6" paint-order="stroke" stroke-opacity="0.7" transform="rotate(-65 1213.5 526.7)">Lövsvägen</text>
<text x="1091" y="183.7" font-family="Liberation Sans" font-size="7" fill="#7b7b7b" stroke="#fff" stroke-width="1.6" paint-order="stroke" stroke-opacity="0.7" transform="rotate(80 1091 183.7)">Långebergavägen</text>
<text x="1021" y="193" font-family="Liberation Sans" font-size="7" fill="#7b7b7b" stroke="#fff" stroke-width="1.6" paint-order="stroke" stroke-opacity="0.7" transform="rotate(-25 1021 193)">Fältarpsvägen</text>
<text x="982.4" y="209.5" font-family="Liberation Sans" font-size="7" fill="#7b7b7b" stroke="#fff" stroke-width="1.6" paint-order="stroke" stroke-opacity="0.7" transform="rotate(70 982.4 209.5)">Mangårdsgatan</text>
<text x="888.4" y="187.4" font-family="Liberation Sans" font-size="7" fill="#7b7b7b" stroke="#fff" stroke-width="1.6" paint-order="stroke" stroke-opacity="0.7" transform="rotate(-82 888.4 187.4)">Sockengatan</text>
<text x="823.9" y="137.6" font-family="Liberation Sans" font-size="7" fill="#7b7b7b" stroke="#fff" stroke-width="1.6" paint-order="stroke" stroke-opacity="0.7" transform="rotate(65 823.9 137.6)">Jönköpingsgatan</text>
<text x="781.5" y="124.7" font-family="Liberation Sans" font-size="7" fill="#7b7b7b" stroke="#fff" stroke-width="1.6" paint-order="stroke" stroke-opacity="0.7" transform="rotate(-15 781.5 124.7)">Filbornavägen</text>
<text x="938" y="307" font-family="Liberation Sans" font-size="7" fill="#7b7b7b" stroke="#fff" stroke-width="1.6" paint-order="stroke" stroke-opacity="0.7" transform="rotate(-18 938 307)">Clausgatan</text>
<text x="910.5" y="381" font-family="Liberation Sans" font-size="7" fill="#7b7b7b" stroke="#fff" stroke-width="1.6" paint-order="stroke" stroke-opacity="0.7" transform="rotate(18 910.5 381)">Rusthållsgatan</text>
<text x="792.5" y="283.3" font-family="Liberation Sans" font-size="7" fill="#7b7b7b" stroke="#fff" stroke-width="1.6" paint-order="stroke" stroke-opacity="0.7" transform="rotate(62 792.5 283.3)">Planteringsvägen</text>
<text x="811" y="382.8" font-family="Liberation Sans" font-size="7" fill="#7b7b7b" stroke="#fff" stroke-width="1.6" paint-order="stroke" stroke-opacity="0.7" transform="rotate(62 811 382.8)">Industrigatan</text>
<text x="759.4" y="287" font-family="Liberation Sans" font-size="7" fill="#7b7b7b" stroke="#fff" stroke-width="1.6" paint-order="stroke" stroke-opacity="0.7" transform="rotate(72 759.4 287)">Sydhamnsgatan</text>
<text x="890" y="416" font-family="Liberation Sans" font-size="7" fill="#7b7b7b" stroke="#fff" stroke-width="1.6" paint-order="stroke" stroke-opacity="0.7" transform="rotate(63 890 416)">Landskronavägen</text>
<text x="873.6" y="475" font-family="Liberation Sans" font-size="7" fill="#7b7b7b" stroke="#fff" stroke-width="1.6" paint-order="stroke" stroke-opacity="0.7" transform="rotate(55 873.6 475)">Kustgatan</text>
<text x="923.4" y="486" font-family="Liberation Sans" font-size="7" fill="#7b7b7b" stroke="#fff" stroke-width="1.6" paint-order="stroke" stroke-opacity="0.7" transform="rotate(48 923.4 486)">Landskronavägen</text>
<text x="1076.4" y="425.2" font-family="Liberation Sans" font-size="7" fill="#7b7b7b" stroke="#fff" stroke-width="1.6" paint-order="stroke" stroke-opacity="0.7" transform="rotate(85 1076.4 425.2)">Stenbrovägen</text>
<text x="956.6" y="497" font-family="Liberation Sans" font-size="7" fill="#7b7b7b" stroke="#fff" stroke-width="1.6" paint-order="stroke" stroke-opacity="0.7" transform="rotate(-12 956.6 497)">svägen</text>
<text x="827.6" y="217" font-family="Liberation Sans" font-size="7" fill="#7b7b7b" stroke="#fff" stroke-width="1.6" paint-order="stroke" stroke-opacity="0.7" transform="rotate(-3 827.6 217)">Fältarpsvägen</text>
<text x="275.7" y="153.8" font-family="Liberation Sans" font-size="7" fill="#7b7b7b" stroke="#fff" stroke-width="1.6" paint-order="stroke" stroke-opacity="0.7" transform="rotate(37 275.7 153.8)">Gl Hellebækvej</text>
<text x="148.8" y="232.3" font-family="Liberation Sans" font-size="7" fill="#7b7b7b" stroke="#fff" stroke-width="1.6" paint-order="stroke" stroke-opacity="0.7" transform="rotate(9 148.8 232.3)">Kronborg Ladegårds Vej</text>
<text x="286" y="225.3" font-family="Liberation Sans" font-size="7" fill="#7b7b7b" stroke="#fff" stroke-width="1.6" paint-order="stroke" stroke-opacity="0.7" transform="rotate(-17 286 225.3)">Gurrevej</text>
<text x="173" y="285.3" font-family="Liberation Sans" font-size="7" fill="#7b7b7b" stroke="#fff" stroke-width="1.6" paint-order="stroke" stroke-opacity="0.7" transform="rotate(-25 173 285.3)">Gurrevej</text>
<text x="277" y="317.5" font-family="Liberation Sans" font-size="7" fill="#7b7b7b" stroke="#fff" stroke-width="1.6" paint-order="stroke" stroke-opacity="0.7" transform="rotate(42 277 317.5)">Viborgvej</text>
<text x="307" y="341" font-family="Liberation Sans" font-size="7" fill="#7b7b7b" stroke="#fff" stroke-width="1.6" paint-order="stroke" stroke-opacity="0.7" transform="rotate(-70 307 341)">Stubbedamsvej</text>
<text x="267.8" y="417.3" font-family="Liberation Sans" font-size="7" fill="#7b7b7b" stroke="#fff" stroke-width="1.6" paint-order="stroke" stroke-opacity="0.7" transform="rotate(-38 267.8 417.3)">Nørrevej</text>
<text x="82.6" y="460.5" font-family="Liberation Sans" font-size="7" fill="#7b7b7b" stroke="#fff" stroke-width="1.6" paint-order="stroke" stroke-opacity="0.7" transform="rotate(-22 82.6 460.5)">Agnetevej</text>
<text x="67.2" y="320.6" font-family="Liberation Sans" font-size="7" fill="#7b7b7b" stroke="#fff" stroke-width="1.6" paint-order="stroke" stroke-opacity="0.7" transform="rotate(8 67.2 320.6)">avej</text>
<text x="342.6" y="276" font-family="Liberation Sans" font-size="8" fill="#8a6a2a" transform="rotate(-42 342.6 276)">Færgevej</text>
<text x="475" y="416" font-family="Liberation Sans" font-size="7" fill="#7c9fd0" opacity="0.8" transform="rotate(-90 475 416)">København, DK - Oslo, NO / Oslo, NO - København, DK ——</text>
<text x="474" y="117" font-family="Liberation Sans" font-size="7" fill="#7c9fd0" opacity="0.8" transform="rotate(90 474 117)">OO / Oslo, NO - København, DK</text>
<text x="246.4" y="269.6" font-family="Liberation Sans" font-size="11.4" font-weight="bold" fill="#76654a" text-anchor="start" stroke="#fff" stroke-width="2" paint-order="stroke" stroke-opacity="0.6" >Helsingør</text>
<text x="334.5" y="192.6" font-family="Liberation Sans" font-size="8.9" font-weight="normal" fill="#8a7552" text-anchor="start" stroke="#fff" stroke-width="2" paint-order="stroke" stroke-opacity="0.6" >Grønnehave</text>
<text x="353" y="205.7" font-family="Liberation Sans" font-size="9.8" font-weight="normal" fill="#4f4f4f" text-anchor="start" stroke="#fff" stroke-width="2" paint-order="stroke" stroke-opacity="0.6" >Kronborg</text>
<text x="218.4" y="430" font-family="Liberation Sans" font-size="9.2" font-weight="normal" fill="#6e6250" text-anchor="start" stroke="#fff" stroke-width="2" paint-order="stroke" stroke-opacity="0.6" >Snekkersten</text>
<text x="941.7" y="429.4" font-family="Liberation Sans" font-size="9.9" font-weight="normal" fill="#4f4f4f" text-anchor="start" stroke="#fff" stroke-width="2" paint-order="stroke" stroke-opacity="0.6" >Ättekulla Industriområde</text>
<text x="1231" y="287" font-family="Liberation Sans" font-size="9.5" font-weight="normal" fill="#5f564a" text-anchor="start" stroke="#fff" stroke-width="2" paint-order="stroke" stroke-opacity="0.6" >Påarp</text>
<text x="1150.8" y="357.8" font-family="Liberation Sans" font-size="9.5" font-weight="normal" fill="#5f564a" text-anchor="start" stroke="#fff" stroke-width="2" paint-order="stroke" stroke-opacity="0.6" >Välluv</text>
<text x="1336.3" y="370" font-family="Liberation Sans" font-size="9.5" font-weight="normal" fill="#5f564a" text-anchor="start" stroke="#fff" stroke-width="2" paint-order="stroke" stroke-opacity="0.6" >Frillestad</text>
<text x="1304.6" y="122.9" font-family="Liberation Sans" font-size="9.5" font-weight="normal" fill="#5f564a" text-anchor="start" stroke="#fff" stroke-width="2" paint-order="stroke" stroke-opacity="0.6" >Rycketofta</text>
<text x="1581.5" y="288.8" font-family="Liberation Sans" font-size="9.5" font-weight="normal" fill="#5f564a" text-anchor="start" stroke="#fff" stroke-width="2" paint-order="stroke" stroke-opacity="0.6" >Hässlunda</text>
<text x="1242.3" y="467.7" font-family="Liberation Sans" font-size="9.5" font-weight="normal" fill="#5f564a" text-anchor="start" stroke="#fff" stroke-width="2" paint-order="stroke" stroke-opacity="0.6" >Bårslöv</text>
<text x="911" y="513.8" font-family="Liberation Sans" font-size="8.5" font-weight="normal" fill="#85724f" text-anchor="start" stroke="#fff" stroke-width="2" paint-order="stroke" stroke-opacity="0.6" >RÅÅ</text>
<text x="886.5" y="264.8" font-family="Liberation Sans" font-size="8.3" font-weight="normal" fill="#85724f" text-anchor="start" stroke="#fff" stroke-width="2" paint-order="stroke" stroke-opacity="0.6" >ESKILSMINNE</text><path d="M696.76,121.11 A11.2,11.2 0 0 1 712.18,121.24 M715.27,126.59 A11.2,11.2 0 0 1 707.37,140.10 M701.58,140.14 A11.2,11.2 0 0 1 693.48,126.82" fill="none" stroke="#0a8eff" stroke-opacity="0.62" stroke-width="2.8"/>
<path d="M694.31,118.48 A14.8,14.8 0 0 1 714.68,118.65 M718.76,125.72 A14.8,14.8 0 0 1 708.33,143.57 M700.67,143.62 A14.8,14.8 0 0 1 689.97,126.02" fill="none" stroke="#0a8eff" stroke-opacity="0.42" stroke-width="2.8"/>
<path d="M691.85,115.84 A18.4,18.4 0 0 1 717.18,116.06 M722.25,124.85 A18.4,18.4 0 0 1 709.29,147.04 M699.76,147.11 A18.4,18.4 0 0 1 686.46,125.22" fill="none" stroke="#0a8eff" stroke-opacity="0.18" stroke-width="2.8"/>
<circle cx="704.4" cy="129.3" r="9.2" fill="#0a8eff"/>
<text x="704.4" y="133.0" text-anchor="middle" font-family="Liberation Sans" font-weight="bold" font-size="10.4" fill="#000">6</text>
<path d="M719.26,154.31 A11.2,11.2 0 0 1 734.68,154.44 M737.77,159.79 A11.2,11.2 0 0 1 729.87,173.30 M724.08,173.34 A11.2,11.2 0 0 1 715.98,160.02" fill="none" stroke="#0a8eff" stroke-opacity="0.62" stroke-width="2.8"/>
<path d="M716.81,151.68 A14.8,14.8 0 0 1 737.18,151.85 M741.26,158.92 A14.8,14.8 0 0 1 730.83,176.77 M723.17,176.82 A14.8,14.8 0 0 1 712.47,159.22" fill="none" stroke="#0a8eff" stroke-opacity="0.42" stroke-width="2.8"/>
<path d="M714.35,149.04 A18.4,18.4 0 0 1 739.68,149.26 M744.75,158.05 A18.4,18.4 0 0 1 731.79,180.24 M722.26,180.31 A18.4,18.4 0 0 1 708.96,158.42" fill="none" stroke="#0a8eff" stroke-opacity="0.18" stroke-width="2.8"/>
<circle cx="726.9" cy="162.5" r="9.2" fill="#0a8eff"/>
<text x="726.9" y="166.2" text-anchor="middle" font-family="Liberation Sans" font-weight="bold" font-size="10.4" fill="#000">8</text>
<path d="M783.46,144.41 A11.2,11.2 0 0 1 798.88,144.54 M801.97,149.89 A11.2,11.2 0 0 1 794.07,163.40 M788.28,163.44 A11.2,11.2 0 0 1 780.18,150.12" fill="none" stroke="#0a8eff" stroke-opacity="0.62" stroke-width="2.8"/>
<path d="M781.01,141.78 A14.8,14.8 0 0 1 801.38,141.95 M805.46,149.02 A14.8,14.8 0 0 1 795.03,166.87 M787.37,166.92 A14.8,14.8 0 0 1 776.67,149.32" fill="none" stroke="#0a8eff" stroke-opacity="0.42" stroke-width="2.8"/>
<path d="M778.55,139.14 A18.4,18.4 0 0 1 803.88,139.36 M808.95,148.15 A18.4,18.4 0 0 1 795.99,170.34 M786.46,170.41 A18.4,18.4 0 0 1 773.16,148.52" fill="none" stroke="#0a8eff" stroke-opacity="0.18" stroke-width="2.8"/>
<circle cx="791.1" cy="152.6" r="9.2" fill="#0a8eff"/>
<text x="791.1" y="156.29999999999998" text-anchor="middle" font-family="Liberation Sans" font-weight="bold" font-size="10.4" fill="#000">4</text>
<path d="M834.76,157.71 A11.2,11.2 0 0 1 850.18,157.84 M853.27,163.19 A11.2,11.2 0 0 1 845.37,176.70 M839.58,176.74 A11.2,11.2 0 0 1 831.48,163.42" fill="none" stroke="#0a8eff" stroke-opacity="0.62" stroke-width="2.8"/>
<path d="M832.31,155.08 A14.8,14.8 0 0 1 852.68,155.25 M856.76,162.32 A14.8,14.8 0 0 1 846.33,180.17 M838.67,180.22 A14.8,14.8 0 0 1 827.97,162.62" fill="none" stroke="#0a8eff" stroke-opacity="0.42" stroke-width="2.8"/>
<path d="M829.85,152.44 A18.4,18.4 0 0 1 855.18,152.66 M860.25,161.45 A18.4,18.4 0 0 1 847.29,183.64 M837.76,183.71 A18.4,18.4 0 0 1 824.46,161.82" fill="none" stroke="#0a8eff" stroke-opacity="0.18" stroke-width="2.8"/>
<circle cx="842.4" cy="165.9" r="9.2" fill="#0a8eff"/>
<text x="842.4" y="169.6" text-anchor="middle" font-family="Liberation Sans" font-weight="bold" font-size="10.4" fill="#000">4</text>
<path d="M876.76,171.71 A11.2,11.2 0 0 1 892.18,171.84 M895.27,177.19 A11.2,11.2 0 0 1 887.37,190.70 M881.58,190.74 A11.2,11.2 0 0 1 873.48,177.42" fill="none" stroke="#0a8eff" stroke-opacity="0.62" stroke-width="2.8"/>
<path d="M874.31,169.08 A14.8,14.8 0 0 1 894.68,169.25 M898.76,176.32 A14.8,14.8 0 0 1 888.33,194.17 M880.67,194.22 A14.8,14.8 0 0 1 869.97,176.62" fill="none" stroke="#0a8eff" stroke-opacity="0.42" stroke-width="2.8"/>
<path d="M871.85,166.44 A18.4,18.4 0 0 1 897.18,166.66 M902.25,175.45 A18.4,18.4 0 0 1 889.29,197.64 M879.76,197.71 A18.4,18.4 0 0 1 866.46,175.82" fill="none" stroke="#0a8eff" stroke-opacity="0.18" stroke-width="2.8"/>
<circle cx="884.4" cy="179.9" r="9.2" fill="#0a8eff"/>
<text x="884.4" y="183.6" text-anchor="middle" font-family="Liberation Sans" font-weight="bold" font-size="10.4" fill="#000">4</text>
<path d="M737.36,218.71 A11.2,11.2 0 0 1 752.78,218.84 M755.87,224.19 A11.2,11.2 0 0 1 747.97,237.70 M742.18,237.74 A11.2,11.2 0 0 1 734.08,224.42" fill="none" stroke="#0a8eff" stroke-opacity="0.62" stroke-width="2.8"/>
<path d="M734.91,216.08 A14.8,14.8 0 0 1 755.28,216.25 M759.36,223.32 A14.8,14.8 0 0 1 748.93,241.17 M741.27,241.22 A14.8,14.8 0 0 1 730.57,223.62" fill="none" stroke="#0a8eff" stroke-opacity="0.42" stroke-width="2.8"/>
<path d="M732.45,213.44 A18.4,18.4 0 0 1 757.78,213.66 M762.85,222.45 A18.4,18.4 0 0 1 749.89,244.64 M740.36,244.71 A18.4,18.4 0 0 1 727.06,222.82" fill="none" stroke="#0a8eff" stroke-opacity="0.18" stroke-width="2.8"/>
<circle cx="745.0" cy="226.9" r="9.2" fill="#0a8eff"/>
<text x="745.0" y="230.6" text-anchor="middle" font-family="Liberation Sans" font-weight="bold" font-size="10.4" fill="#000">9</text>
<path d="M848.76,208.71 A11.2,11.2 0 0 1 864.18,208.84 M867.27,214.19 A11.2,11.2 0 0 1 859.37,227.70 M853.58,227.74 A11.2,11.2 0 0 1 845.48,214.42" fill="none" stroke="#0a8eff" stroke-opacity="0.62" stroke-width="2.8"/>
<path d="M846.31,206.08 A14.8,14.8 0 0 1 866.68,206.25 M870.76,213.32 A14.8,14.8 0 0 1 860.33,231.17 M852.67,231.22 A14.8,14.8 0 0 1 841.97,213.62" fill="none" stroke="#0a8eff" stroke-opacity="0.42" stroke-width="2.8"/>
<path d="M843.85,203.44 A18.4,18.4 0 0 1 869.18,203.66 M874.25,212.45 A18.4,18.4 0 0 1 861.29,234.64 M851.76,234.71 A18.4,18.4 0 0 1 838.46,212.82" fill="none" stroke="#0a8eff" stroke-opacity="0.18" stroke-width="2.8"/>
<circle cx="856.4" cy="216.9" r="9.2" fill="#0a8eff"/>
<text x="856.4" y="220.6" text-anchor="middle" font-family="Liberation Sans" font-weight="bold" font-size="10.4" fill="#000">2</text>
<path d="M949.36,195.71 A11.2,11.2 0 0 1 964.78,195.84 M967.87,201.19 A11.2,11.2 0 0 1 959.97,214.70 M954.18,214.74 A11.2,11.2 0 0 1 946.08,201.42" fill="none" stroke="#0a8eff" stroke-opacity="0.62" stroke-width="2.8"/>
<path d="M946.91,193.08 A14.8,14.8 0 0 1 967.28,193.25 M971.36,200.32 A14.8,14.8 0 0 1 960.93,218.17 M953.27,218.22 A14.8,14.8 0 0 1 942.57,200.62" fill="none" stroke="#0a8eff" stroke-opacity="0.42" stroke-width="2.8"/>
<path d="M944.45,190.44 A18.4,18.4 0 0 1 969.78,190.66 M974.85,199.45 A18.4,18.4 0 0 1 961.89,221.64 M952.36,221.71 A18.4,18.4 0 0 1 939.06,199.82" fill="none" stroke="#0a8eff" stroke-opacity="0.18" stroke-width="2.8"/>
<circle cx="957.0" cy="203.9" r="9.2" fill="#0a8eff"/>
<text x="957.0" y="207.6" text-anchor="middle" font-family="Liberation Sans" font-weight="bold" font-size="10.4" fill="#000">3</text>
<path d="M981.76,191.21 A11.2,11.2 0 0 1 997.18,191.34 M1000.27,196.69 A11.2,11.2 0 0 1 992.37,210.20 M986.58,210.24 A11.2,11.2 0 0 1 978.48,196.92" fill="none" stroke="#0a8eff" stroke-opacity="0.62" stroke-width="2.8"/>
<path d="M979.31,188.58 A14.8,14.8 0 0 1 999.68,188.75 M1003.76,195.82 A14.8,14.8 0 0 1 993.33,213.67 M985.67,213.72 A14.8,14.8 0 0 1 974.97,196.12" fill="none" stroke="#0a8eff" stroke-opacity="0.42" stroke-width="2.8"/>
<path d="M976.85,185.94 A18.4,18.4 0 0 1 1002.18,186.16 M1007.25,194.95 A18.4,18.4 0 0 1 994.29,217.14 M984.76,217.21 A18.4,18.4 0 0 1 971.46,195.32" fill="none" stroke="#0a8eff" stroke-opacity="0.18" stroke-width="2.8"/>
<circle cx="989.4" cy="199.4" r="9.2" fill="#0a8eff"/>
<text x="989.4" y="203.1" text-anchor="middle" font-family="Liberation Sans" font-weight="bold" font-size="10.4" fill="#000">2</text>
<path d="M775.36,267.51 A11.2,11.2 0 0 1 790.78,267.64 M793.87,272.99 A11.2,11.2 0 0 1 785.97,286.50 M780.18,286.54 A11.2,11.2 0 0 1 772.08,273.22" fill="none" stroke="#0a8eff" stroke-opacity="0.62" stroke-width="2.8"/>
<path d="M772.91,264.88 A14.8,14.8 0 0 1 793.28,265.05 M797.36,272.12 A14.8,14.8 0 0 1 786.93,289.97 M779.27,290.02 A14.8,14.8 0 0 1 768.57,272.42" fill="none" stroke="#0a8eff" stroke-opacity="0.42" stroke-width="2.8"/>
<path d="M770.45,262.24 A18.4,18.4 0 0 1 795.78,262.46 M800.85,271.25 A18.4,18.4 0 0 1 787.89,293.44 M778.36,293.51 A18.4,18.4 0 0 1 765.06,271.62" fill="none" stroke="#0a8eff" stroke-opacity="0.18" stroke-width="2.8"/>
<circle cx="783.0" cy="275.7" r="9.2" fill="#0a8eff"/>
<text x="783.0" y="279.4" text-anchor="middle" font-family="Liberation Sans" font-weight="bold" font-size="10.4" fill="#000">6</text>
<path d="M866.76,257.51 A11.2,11.2 0 0 1 882.18,257.64 M885.27,262.99 A11.2,11.2 0 0 1 877.37,276.50 M871.58,276.54 A11.2,11.2 0 0 1 863.48,263.22" fill="none" stroke="#0a8eff" stroke-opacity="0.62" stroke-width="2.8"/>
<path d="M864.31,254.88 A14.8,14.8 0 0 1 884.68,255.05 M888.76,262.12 A14.8,14.8 0 0 1 878.33,279.97 M870.67,280.02 A14.8,14.8 0 0 1 859.97,262.42" fill="none" stroke="#0a8eff" stroke-opacity="0.42" stroke-width="2.8"/>
<path d="M861.85,252.24 A18.4,18.4 0 0 1 887.18,252.46 M892.25,261.25 A18.4,18.4 0 0 1 879.29,283.44 M869.76,283.51 A18.4,18.4 0 0 1 856.46,261.62" fill="none" stroke="#0a8eff" stroke-opacity="0.18" stroke-width="2.8"/>
<circle cx="874.4" cy="265.7" r="9.2" fill="#0a8eff"/>
<text x="874.4" y="269.4" text-anchor="middle" font-family="Liberation Sans" font-weight="bold" font-size="10.4" fill="#000">3</text>
<path d="M913.56,253.71 A11.2,11.2 0 0 1 928.98,253.84 M932.07,259.19 A11.2,11.2 0 0 1 924.17,272.70 M918.38,272.74 A11.2,11.2 0 0 1 910.28,259.42" fill="none" stroke="#0a8eff" stroke-opacity="0.62" stroke-width="2.8"/>
<path d="M911.11,251.08 A14.8,14.8 0 0 1 931.48,251.25 M935.56,258.32 A14.8,14.8 0 0 1 925.13,276.17 M917.47,276.22 A14.8,14.8 0 0 1 906.77,258.62" fill="none" stroke="#0a8eff" stroke-opacity="0.42" stroke-width="2.8"/>
<path d="M908.65,248.44 A18.4,18.4 0 0 1 933.98,248.66 M939.05,257.45 A18.4,18.4 0 0 1 926.09,279.64 M916.56,279.71 A18.4,18.4 0 0 1 903.26,257.82" fill="none" stroke="#0a8eff" stroke-opacity="0.18" stroke-width="2.8"/>
<circle cx="921.1999999999999" cy="261.9" r="9.2" fill="#0a8eff"/>
<text x="921.1999999999999" y="265.59999999999997" text-anchor="middle" font-family="Liberation Sans" font-weight="bold" font-size="10.4" fill="#000">4</text>
<path d="M834.76,278.61 A11.2,11.2 0 0 1 850.18,278.74 M853.27,284.09 A11.2,11.2 0 0 1 845.37,297.60 M839.58,297.64 A11.2,11.2 0 0 1 831.48,284.32" fill="none" stroke="#0a8eff" stroke-opacity="0.62" stroke-width="2.8"/>
<path d="M832.31,275.98 A14.8,14.8 0 0 1 852.68,276.15 M856.76,283.22 A14.8,14.8 0 0 1 846.33,301.07 M838.67,301.12 A14.8,14.8 0 0 1 827.97,283.52" fill="none" stroke="#0a8eff" stroke-opacity="0.42" stroke-width="2.8"/>
<path d="M829.85,273.34 A18.4,18.4 0 0 1 855.18,273.56 M860.25,282.35 A18.4,18.4 0 0 1 847.29,304.54 M837.76,304.61 A18.4,18.4 0 0 1 824.46,282.72" fill="none" stroke="#0a8eff" stroke-opacity="0.18" stroke-width="2.8"/>
<circle cx="842.4" cy="286.79999999999995" r="9.2" fill="#0a8eff"/>
<text x="842.4" y="290.49999999999994" text-anchor="middle" font-family="Liberation Sans" font-weight="bold" font-size="10.4" fill="#000">2</text>
<path d="M889.66,289.71 A11.2,11.2 0 0 1 905.08,289.84 M908.17,295.19 A11.2,11.2 0 0 1 900.27,308.70 M894.48,308.74 A11.2,11.2 0 0 1 886.38,295.42" fill="none" stroke="#0a8eff" stroke-opacity="0.62" stroke-width="2.8"/>
<path d="M887.21,287.08 A14.8,14.8 0 0 1 907.58,287.25 M911.66,294.32 A14.8,14.8 0 0 1 901.23,312.17 M893.57,312.22 A14.8,14.8 0 0 1 882.87,294.62" fill="none" stroke="#0a8eff" stroke-opacity="0.42" stroke-width="2.8"/>
<path d="M884.75,284.44 A18.4,18.4 0 0 1 910.08,284.66 M915.15,293.45 A18.4,18.4 0 0 1 902.19,315.64 M892.66,315.71 A18.4,18.4 0 0 1 879.36,293.82" fill="none" stroke="#0a8eff" stroke-opacity="0.18" stroke-width="2.8"/>
<circle cx="897.3" cy="297.9" r="9.2" fill="#0a8eff"/>
<text x="897.3" y="301.59999999999997" text-anchor="middle" font-family="Liberation Sans" font-weight="bold" font-size="10.4" fill="#000">3</text>
<path d="M781.56,310.31 A11.2,11.2 0 0 1 796.98,310.44 M800.07,315.79 A11.2,11.2 0 0 1 792.17,329.30 M786.38,329.34 A11.2,11.2 0 0 1 778.28,316.02" fill="none" stroke="#0a8eff" stroke-opacity="0.62" stroke-width="2.8"/>
<path d="M779.11,307.68 A14.8,14.8 0 0 1 799.48,307.85 M803.56,314.92 A14.8,14.8 0 0 1 793.13,332.77 M785.47,332.82 A14.8,14.8 0 0 1 774.77,315.22" fill="none" stroke="#0a8eff" stroke-opacity="0.42" stroke-width="2.8"/>
<path d="M776.65,305.04 A18.4,18.4 0 0 1 801.98,305.26 M807.05,314.05 A18.4,18.4 0 0 1 794.09,336.24 M784.56,336.31 A18.4,18.4 0 0 1 771.26,314.42" fill="none" stroke="#0a8eff" stroke-opacity="0.18" stroke-width="2.8"/>
<circle cx="789.1999999999999" cy="318.5" r="9.2" fill="#0a8eff"/>
<text x="789.1999999999999" y="322.2" text-anchor="middle" font-family="Liberation Sans" font-weight="bold" font-size="10.4" fill="#000">4</text>
<path d="M812.76,326.71 A11.2,11.2 0 0 1 828.18,326.84 M831.27,332.19 A11.2,11.2 0 0 1 823.37,345.70 M817.58,345.74 A11.2,11.2 0 0 1 809.48,332.42" fill="none" stroke="#0a8eff" stroke-opacity="0.62" stroke-width="2.8"/>
<path d="M810.31,324.08 A14.8,14.8 0 0 1 830.68,324.25 M834.76,331.32 A14.8,14.8 0 0 1 824.33,349.17 M816.67,349.22 A14.8,14.8 0 0 1 805.97,331.62" fill="none" stroke="#0a8eff" stroke-opacity="0.42" stroke-width="2.8"/>
<path d="M807.85,321.44 A18.4,18.4 0 0 1 833.18,321.66 M838.25,330.45 A18.4,18.4 0 0 1 825.29,352.64 M815.76,352.71 A18.4,18.4 0 0 1 802.46,330.82" fill="none" stroke="#0a8eff" stroke-opacity="0.18" stroke-width="2.8"/>
<circle cx="820.4" cy="334.9" r="9.2" fill="#0a8eff"/>
<text x="820.4" y="338.59999999999997" text-anchor="middle" font-family="Liberation Sans" font-weight="bold" font-size="10.4" fill="#000">4</text>
<path d="M844.76,310.71 A11.2,11.2 0 0 1 860.18,310.84 M863.27,316.19 A11.2,11.2 0 0 1 855.37,329.70 M849.58,329.74 A11.2,11.2 0 0 1 841.48,316.42" fill="none" stroke="#0a8eff" stroke-opacity="0.62" stroke-width="2.8"/>
<path d="M842.31,308.08 A14.8,14.8 0 0 1 862.68,308.25 M866.76,315.32 A14.8,14.8 0 0 1 856.33,333.17 M848.67,333.22 A14.8,14.8 0 0 1 837.97,315.62" fill="none" stroke="#0a8eff" stroke-opacity="0.42" stroke-width="2.8"/>
<path d="M839.85,305.44 A18.4,18.4 0 0 1 865.18,305.66 M870.25,314.45 A18.4,18.4 0 0 1 857.29,336.64 M847.76,336.71 A18.4,18.4 0 0 1 834.46,314.82" fill="none" stroke="#0a8eff" stroke-opacity="0.18" stroke-width="2.8"/>
<circle cx="852.4" cy="318.9" r="9.2" fill="#0a8eff"/>
<text x="852.4" y="322.59999999999997" text-anchor="middle" font-family="Liberation Sans" font-weight="bold" font-size="10.4" fill="#000">3</text>
<path d="M895.76,340.51 A11.2,11.2 0 0 1 911.18,340.64 M914.27,345.99 A11.2,11.2 0 0 1 906.37,359.50 M900.58,359.54 A11.2,11.2 0 0 1 892.48,346.22" fill="none" stroke="#0a8eff" stroke-opacity="0.62" stroke-width="2.8"/>
<path d="M893.31,337.88 A14.8,14.8 0 0 1 913.68,338.05 M917.76,345.12 A14.8,14.8 0 0 1 907.33,362.97 M899.67,363.02 A14.8,14.8 0 0 1 888.97,345.42" fill="none" stroke="#0a8eff" stroke-opacity="0.42" stroke-width="2.8"/>
<path d="M890.85,335.24 A18.4,18.4 0 0 1 916.18,335.46 M921.25,344.25 A18.4,18.4 0 0 1 908.29,366.44 M898.76,366.51 A18.4,18.4 0 0 1 885.46,344.62" fill="none" stroke="#0a8eff" stroke-opacity="0.18" stroke-width="2.8"/>
<circle cx="903.4" cy="348.7" r="9.2" fill="#0a8eff"/>
<text x="903.4" y="352.4" text-anchor="middle" font-family="Liberation Sans" font-weight="bold" font-size="10.4" fill="#000">3</text>
<path d="M958.56,325.01 A11.2,11.2 0 0 1 973.98,325.14 M977.07,330.49 A11.2,11.2 0 0 1 969.17,344.00 M963.38,344.04 A11.2,11.2 0 0 1 955.28,330.72" fill="none" stroke="#0a8eff" stroke-opacity="0.62" stroke-width="2.8"/>
<path d="M956.11,322.38 A14.8,14.8 0 0 1 976.48,322.55 M980.56,329.62 A14.8,14.8 0 0 1 970.13,347.47 M962.47,347.52 A14.8,14.8 0 0 1 951.77,329.92" fill="none" stroke="#0a8eff" stroke-opacity="0.42" stroke-width="2.8"/>
<path d="M953.65,319.74 A18.4,18.4 0 0 1 978.98,319.96 M984.05,328.75 A18.4,18.4 0 0 1 971.09,350.94 M961.56,351.01 A18.4,18.4 0 0 1 948.26,329.12" fill="none" stroke="#0a8eff" stroke-opacity="0.18" stroke-width="2.8"/>
<circle cx="966.1999999999999" cy="333.2" r="9.2" fill="#0a8eff"/>
<text x="966.1999999999999" y="336.9" text-anchor="middle" font-family="Liberation Sans" font-weight="bold" font-size="10.4" fill="#000">3</text>
<path d="M1001.36,323.71 A11.2,11.2 0 0 1 1016.78,323.84 M1019.87,329.19 A11.2,11.2 0 0 1 1011.97,342.70 M1006.18,342.74 A11.2,11.2 0 0 1 998.08,329.42" fill="none" stroke="#0a8eff" stroke-opacity="0.62" stroke-width="2.8"/>
<path d="M998.91,321.08 A14.8,14.8 0 0 1 1019.28,321.25 M1023.36,328.32 A14.8,14.8 0 0 1 1012.93,346.17 M1005.27,346.22 A14.8,14.8 0 0 1 994.57,328.62" fill="none" stroke="#0a8eff" stroke-opacity="0.42" stroke-width="2.8"/>
<path d="M996.45,318.44 A18.4,18.4 0 0 1 1021.78,318.66 M1026.85,327.45 A18.4,18.4 0 0 1 1013.89,349.64 M1004.36,349.71 A18.4,18.4 0 0 1 991.06,327.82" fill="none" stroke="#0a8eff" stroke-opacity="0.18" stroke-width="2.8"/>
<circle cx="1009.0" cy="331.9" r="9.2" fill="#0a8eff"/>
<text x="1009.0" y="335.59999999999997" text-anchor="middle" font-family="Liberation Sans" font-weight="bold" font-size="10.4" fill="#000">2</text>
<path d="M1025.76,356.31 A11.2,11.2 0 0 1 1041.18,356.44 M1044.27,361.79 A11.2,11.2 0 0 1 1036.37,375.30 M1030.58,375.34 A11.2,11.2 0 0 1 1022.48,362.02" fill="none" stroke="#0a8eff" stroke-opacity="0.62" stroke-width="2.8"/>
<path d="M1023.31,353.68 A14.8,14.8 0 0 1 1043.68,353.85 M1047.76,360.92 A14.8,14.8 0 0 1 1037.33,378.77 M1029.67,378.82 A14.8,14.8 0 0 1 1018.97,361.22" fill="none" stroke="#0a8eff" stroke-opacity="0.42" stroke-width="2.8"/>
<path d="M1020.85,351.04 A18.4,18.4 0 0 1 1046.18,351.26 M1051.25,360.05 A18.4,18.4 0 0 1 1038.29,382.24 M1028.76,382.31 A18.4,18.4 0 0 1 1015.46,360.42" fill="none" stroke="#0a8eff" stroke-opacity="0.18" stroke-width="2.8"/>
<circle cx="1033.4" cy="364.5" r="9.2" fill="#0a8eff"/>
<text x="1033.4" y="368.2" text-anchor="middle" font-family="Liberation Sans" font-weight="bold" font-size="10.4" fill="#000">3</text>
<path d="M951.16,370.71 A11.2,11.2 0 0 1 966.58,370.84 M969.67,376.19 A11.2,11.2 0 0 1 961.77,389.70 M955.98,389.74 A11.2,11.2 0 0 1 947.88,376.42" fill="none" stroke="#0a8eff" stroke-opacity="0.62" stroke-width="2.8"/>
<path d="M948.71,368.08 A14.8,14.8 0 0 1 969.08,368.25 M973.16,375.32 A14.8,14.8 0 0 1 962.73,393.17 M955.07,393.22 A14.8,14.8 0 0 1 944.37,375.62" fill="none" stroke="#0a8eff" stroke-opacity="0.42" stroke-width="2.8"/>
<path d="M946.25,365.44 A18.4,18.4 0 0 1 971.58,365.66 M976.65,374.45 A18.4,18.4 0 0 1 963.69,396.64 M954.16,396.71 A18.4,18.4 0 0 1 940.86,374.82" fill="none" stroke="#0a8eff" stroke-opacity="0.18" stroke-width="2.8"/>
<circle cx="958.8" cy="378.9" r="9.2" fill="#0a8eff"/>
<text x="958.8" y="382.59999999999997" text-anchor="middle" font-family="Liberation Sans" font-weight="bold" font-size="10.4" fill="#000">3</text>
<path d="M848.36,390.31 A11.2,11.2 0 0 1 863.78,390.44 M866.87,395.79 A11.2,11.2 0 0 1 858.97,409.30 M853.18,409.34 A11.2,11.2 0 0 1 845.08,396.02" fill="none" stroke="#0a8eff" stroke-opacity="0.62" stroke-width="2.8"/>
<path d="M845.91,387.68 A14.8,14.8 0 0 1 866.28,387.85 M870.36,394.92 A14.8,14.8 0 0 1 859.93,412.77 M852.27,412.82 A14.8,14.8 0 0 1 841.57,395.22" fill="none" stroke="#0a8eff" stroke-opacity="0.42" stroke-width="2.8"/>
<path d="M843.45,385.04 A18.4,18.4 0 0 1 868.78,385.26 M873.85,394.05 A18.4,18.4 0 0 1 860.89,416.24 M851.36,416.31 A18.4,18.4 0 0 1 838.06,394.42" fill="none" stroke="#0a8eff" stroke-opacity="0.18" stroke-width="2.8"/>
<circle cx="856.0" cy="398.5" r="9.2" fill="#0a8eff"/>
<text x="856.0" y="402.2" text-anchor="middle" font-family="Liberation Sans" font-weight="bold" font-size="10.4" fill="#000">5</text>
<path d="M851.26,448.11 A11.2,11.2 0 0 1 866.68,448.24 M869.77,453.59 A11.2,11.2 0 0 1 861.87,467.10 M856.08,467.14 A11.2,11.2 0 0 1 847.98,453.82" fill="none" stroke="#0a8eff" stroke-opacity="0.62" stroke-width="2.8"/>
<path d="M848.81,445.48 A14.8,14.8 0 0 1 869.18,445.65 M873.26,452.72 A14.8,14.8 0 0 1 862.83,470.57 M855.17,470.62 A14.8,14.8 0 0 1 844.47,453.02" fill="none" stroke="#0a8eff" stroke-opacity="0.42" stroke-width="2.8"/>
<path d="M846.35,442.84 A18.4,18.4 0 0 1 871.68,443.06 M876.75,451.85 A18.4,18.4 0 0 1 863.79,474.04 M854.26,474.11 A18.4,18.4 0 0 1 840.96,452.22" fill="none" stroke="#0a8eff" stroke-opacity="0.18" stroke-width="2.8"/>
<circle cx="858.9" cy="456.29999999999995" r="9.2" fill="#0a8eff"/>
<text x="858.9" y="459.99999999999994" text-anchor="middle" font-family="Liberation Sans" font-weight="bold" font-size="10.4" fill="#000">4</text>
<path d="M887.76,470.71 A11.2,11.2 0 0 1 903.18,470.84 M906.27,476.19 A11.2,11.2 0 0 1 898.37,489.70 M892.58,489.74 A11.2,11.2 0 0 1 884.48,476.42" fill="none" stroke="#0a8eff" stroke-opacity="0.62" stroke-width="2.8"/>
<path d="M885.31,468.08 A14.8,14.8 0 0 1 905.68,468.25 M909.76,475.32 A14.8,14.8 0 0 1 899.33,493.17 M891.67,493.22 A14.8,14.8 0 0 1 880.97,475.62" fill="none" stroke="#0a8eff" stroke-opacity="0.42" stroke-width="2.8"/>
<path d="M882.85,465.44 A18.4,18.4 0 0 1 908.18,465.66 M913.25,474.45 A18.4,18.4 0 0 1 900.29,496.64 M890.76,496.71 A18.4,18.4 0 0 1 877.46,474.82" fill="none" stroke="#0a8eff" stroke-opacity="0.18" stroke-width="2.8"/>
<circle cx="895.4" cy="478.9" r="9.2" fill="#0a8eff"/>
<text x="895.4" y="482.59999999999997" text-anchor="middle" font-family="Liberation Sans" font-weight="bold" font-size="10.4" fill="#000">5</text>
<path d="M934.56,489.71 A11.2,11.2 0 0 1 949.98,489.84 M953.07,495.19 A11.2,11.2 0 0 1 945.17,508.70 M939.38,508.74 A11.2,11.2 0 0 1 931.28,495.42" fill="none" stroke="#0a8eff" stroke-opacity="0.62" stroke-width="2.8"/>
<path d="M932.11,487.08 A14.8,14.8 0 0 1 952.48,487.25 M956.56,494.32 A14.8,14.8 0 0 1 946.13,512.17 M938.47,512.22 A14.8,14.8 0 0 1 927.77,494.62" fill="none" stroke="#0a8eff" stroke-opacity="0.42" stroke-width="2.8"/>
<path d="M929.65,484.44 A18.4,18.4 0 0 1 954.98,484.66 M960.05,493.45 A18.4,18.4 0 0 1 947.09,515.64 M937.56,515.71 A18.4,18.4 0 0 1 924.26,493.82" fill="none" stroke="#0a8eff" stroke-opacity="0.18" stroke-width="2.8"/>
<circle cx="942.1999999999999" cy="497.9" r="9.2" fill="#0a8eff"/>
<text x="942.1999999999999" y="501.59999999999997" text-anchor="middle" font-family="Liberation Sans" font-weight="bold" font-size="10.4" fill="#000">6</text>
<path d="M1005.76,465.71 A11.2,11.2 0 0 1 1021.18,465.84 M1024.27,471.19 A11.2,11.2 0 0 1 1016.37,484.70 M1010.58,484.74 A11.2,11.2 0 0 1 1002.48,471.42" fill="none" stroke="#0a8eff" stroke-opacity="0.62" stroke-width="2.8"/>
<path d="M1003.31,463.08 A14.8,14.8 0 0 1 1023.68,463.25 M1027.76,470.32 A14.8,14.8 0 0 1 1017.33,488.17 M1009.67,488.22 A14.8,14.8 0 0 1 998.97,470.62" fill="none" stroke="#0a8eff" stroke-opacity="0.42" stroke-width="2.8"/>
<path d="M1000.85,460.44 A18.4,18.4 0 0 1 1026.18,460.66 M1031.25,469.45 A18.4,18.4 0 0 1 1018.29,491.64 M1008.76,491.71 A18.4,18.4 0 0 1 995.46,469.82" fill="none" stroke="#0a8eff" stroke-opacity="0.18" stroke-width="2.8"/>
<circle cx="1013.4" cy="473.9" r="9.2" fill="#0a8eff"/>
<text x="1013.4" y="477.59999999999997" text-anchor="middle" font-family="Liberation Sans" font-weight="bold" font-size="10.4" fill="#000">2</text>
<path d="M1000.26,522.71 A11.2,11.2 0 0 1 1015.68,522.84 M1018.77,528.19 A11.2,11.2 0 0 1 1010.87,541.70 M1005.08,541.74 A11.2,11.2 0 0 1 996.98,528.42" fill="none" stroke="#0a8eff" stroke-opacity="0.62" stroke-width="2.8"/>
<path d="M997.81,520.08 A14.8,14.8 0 0 1 1018.18,520.25 M1022.26,527.32 A14.8,14.8 0 0 1 1011.83,545.17 M1004.17,545.22 A14.8,14.8 0 0 1 993.47,527.62" fill="none" stroke="#0a8eff" stroke-opacity="0.42" stroke-width="2.8"/>
<path d="M995.35,517.44 A18.4,18.4 0 0 1 1020.68,517.66 M1025.75,526.45 A18.4,18.4 0 0 1 1012.79,548.64 M1003.26,548.71 A18.4,18.4 0 0 1 989.96,526.82" fill="none" stroke="#0a8eff" stroke-opacity="0.18" stroke-width="2.8"/>
<circle cx="1007.9" cy="530.9" r="9.2" fill="#0a8eff"/>
<text x="1007.9" y="534.6" text-anchor="middle" font-family="Liberation Sans" font-weight="bold" font-size="10.4" fill="#000">3</text>
<path d="M740.36,121.71 A11.2,11.2 0 0 1 755.78,121.84 M758.87,127.19 A11.2,11.2 0 0 1 750.97,140.70 M745.18,140.74 A11.2,11.2 0 0 1 737.08,127.42" fill="none" stroke="#f5b800" stroke-opacity="0.62" stroke-width="2.8"/>
<path d="M737.91,119.08 A14.8,14.8 0 0 1 758.28,119.25 M762.36,126.32 A14.8,14.8 0 0 1 751.93,144.17 M744.27,144.22 A14.8,14.8 0 0 1 733.57,126.62" fill="none" stroke="#f5b800" stroke-opacity="0.42" stroke-width="2.8"/>
<path d="M735.45,116.44 A18.4,18.4 0 0 1 760.78,116.66 M765.85,125.45 A18.4,18.4 0 0 1 752.89,147.64 M743.36,147.71 A18.4,18.4 0 0 1 730.06,125.82" fill="none" stroke="#f5b800" stroke-opacity="0.18" stroke-width="2.8"/>
<circle cx="748.0" cy="129.9" r="9.2" fill="#ffc000"/>
<text x="748.0" y="133.6" text-anchor="middle" font-family="Liberation Sans" font-weight="bold" font-size="10.4" fill="#000">10</text>
<path d="M731.76,187.51 A11.2,11.2 0 0 1 747.18,187.64 M750.27,192.99 A11.2,11.2 0 0 1 742.37,206.50 M736.58,206.54 A11.2,11.2 0 0 1 728.48,193.22" fill="none" stroke="#f5b800" stroke-opacity="0.62" stroke-width="2.8"/>
<path d="M729.31,184.88 A14.8,14.8 0 0 1 749.68,185.05 M753.76,192.12 A14.8,14.8 0 0 1 743.33,209.97 M735.67,210.02 A14.8,14.8 0 0 1 724.97,192.42" fill="none" stroke="#f5b800" stroke-opacity="0.42" stroke-width="2.8"/>
<path d="M726.85,182.24 A18.4,18.4 0 0 1 752.18,182.46 M757.25,191.25 A18.4,18.4 0 0 1 744.29,213.44 M734.76,213.51 A18.4,18.4 0 0 1 721.46,191.62" fill="none" stroke="#f5b800" stroke-opacity="0.18" stroke-width="2.8"/>
<circle cx="739.4" cy="195.70000000000002" r="9.2" fill="#ffc000"/>
<text x="739.4" y="199.4" text-anchor="middle" font-family="Liberation Sans" font-weight="bold" font-size="10.4" fill="#000">13</text>
<path d="M795.26,189.31 A11.2,11.2 0 0 1 810.68,189.44 M813.77,194.79 A11.2,11.2 0 0 1 805.87,208.30 M800.08,208.34 A11.2,11.2 0 0 1 791.98,195.02" fill="none" stroke="#f5b800" stroke-opacity="0.62" stroke-width="2.8"/>
<path d="M792.81,186.68 A14.8,14.8 0 0 1 813.18,186.85 M817.26,193.92 A14.8,14.8 0 0 1 806.83,211.77 M799.17,211.82 A14.8,14.8 0 0 1 788.47,194.22" fill="none" stroke="#f5b800" stroke-opacity="0.42" stroke-width="2.8"/>
<path d="M790.35,184.04 A18.4,18.4 0 0 1 815.68,184.26 M820.75,193.05 A18.4,18.4 0 0 1 807.79,215.24 M798.26,215.31 A18.4,18.4 0 0 1 784.96,193.42" fill="none" stroke="#f5b800" stroke-opacity="0.18" stroke-width="2.8"/>
<circle cx="802.9" cy="197.5" r="9.2" fill="#ffc000"/>
<text x="802.9" y="201.2" text-anchor="middle" font-family="Liberation Sans" font-weight="bold" font-size="10.4" fill="#000">11</text>
<ellipse cx="823" cy="126.5" rx="4" ry="5.5" transform="rotate(40 823 126.5)" fill="#555" opacity="0.55" filter="url(#blur)"/>
<path d="M817,135.0 C816,130.5 813.5,126.5 810.6,122.1 A9.1,9.1 0 1 1 823.4,122.1 C820.5,126.5 818,130.5 817,135.0 Z" fill="#f95700"/>
<circle cx="817" cy="115.5" r="4.8" fill="#fff"/>
<ellipse cx="952" cy="139.4" rx="4" ry="5.5" transform="rotate(40 952 139.4)" fill="#555" opacity="0.55" filter="url(#blur)"/>
<path d="M946,147.9 C945,143.4 942.5,139.4 939.6,135.0 A9.1,9.1 0 1 1 952.4,135.0 C949.5,139.4 947,143.4 946,147.9 Z" fill="#f95700"/>
<circle cx="946" cy="128.4" r="4.8" fill="#fff"/>
<ellipse cx="995.5" cy="150.6" rx="4" ry="5.5" transform="rotate(40 995.5 150.6)" fill="#555" opacity="0.55" filter="url(#blur)"/>
<path d="M989.5,159.1 C988.5,154.6 986.0,150.6 983.1,146.2 A9.1,9.1 0 1 1 995.9,146.2 C993.0,150.6 990.5,154.6 989.5,159.1 Z" fill="#f95700"/>
<circle cx="989.5" cy="139.6" r="4.8" fill="#fff"/>
<ellipse cx="1076" cy="123.4" rx="4" ry="5.5" transform="rotate(40 1076 123.4)" fill="#555" opacity="0.55" filter="url(#blur)"/>
<path d="M1070,131.9 C1069,127.4 1066.5,123.4 1063.6,119.0 A9.1,9.1 0 1 1 1076.4,119.0 C1073.5,123.4 1071,127.4 1070,131.9 Z" fill="#f95700"/>
<circle cx="1070" cy="112.4" r="4.8" fill="#fff"/>
<ellipse cx="1075.8" cy="157.9" rx="4" ry="5.5" transform="rotate(40 1075.8 157.9)" fill="#555" opacity="0.55" filter="url(#blur)"/>
<path d="M1069.8,166.4 C1068.8,161.9 1066.3,157.9 1063.3999999999999,153.5 A9.1,9.1 0 1 1 1076.2,153.5 C1073.3,157.9 1070.8,161.9 1069.8,166.4 Z" fill="#f95700"/>
<circle cx="1069.8" cy="146.9" r="4.8" fill="#fff"/>
<ellipse cx="789.3" cy="222.4" rx="4" ry="5.5" transform="rotate(40 789.3 222.4)" fill="#555" opacity="0.55" filter="url(#blur)"/>
<path d="M783.3,230.9 C782.3,226.4 779.8,222.4 776.9,218.0 A9.1,9.1 0 1 1 789.6999999999999,218.0 C786.8,222.4 784.3,226.4 783.3,230.9 Z" fill="#f95700"/>
<circle cx="783.3" cy="211.4" r="4.8" fill="#fff"/>
<ellipse cx="818.8" cy="237" rx="4" ry="5.5" transform="rotate(40 818.8 237)" fill="#555" opacity="0.55" filter="url(#blur)"/>
<path d="M812.8,245.5 C811.8,241 809.3,237 806.4,232.6 A9.1,9.1 0 1 1 819.1999999999999,232.6 C816.3,237 813.8,241 812.8,245.5 Z" fill="#f95700"/>
<circle cx="812.8" cy="226" r="4.8" fill="#fff"/>
<ellipse cx="1016.8" cy="250" rx="4" ry="5.5" transform="rotate(40 1016.8 250)" fill="#555" opacity="0.55" filter="url(#blur)"/>
<path d="M1010.8,258.5 C1009.8,254 1007.3,250 1004.4,245.6 A9.1,9.1 0 1 1 1017.1999999999999,245.6 C1014.3,250 1011.8,254 1010.8,258.5 Z" fill="#f95700"/>
<circle cx="1010.8" cy="239" r="4.8" fill="#fff"/>
<ellipse cx="1095" cy="252" rx="4" ry="5.5" transform="rotate(40 1095 252)" fill="#555" opacity="0.55" filter="url(#blur)"/>
<path d="M1089,260.5 C1088,256 1085.5,252 1082.6,247.6 A9.1,9.1 0 1 1 1095.4,247.6 C1092.5,252 1090,256 1089,260.5 Z" fill="#f95700"/>
<circle cx="1089" cy="241" r="4.8" fill="#fff"/>
<ellipse cx="982" cy="287" rx="4" ry="5.5" transform="rotate(40 982 287)" fill="#555" opacity="0.55" filter="url(#blur)"/>
<path d="M976,295.5 C975,291 972.5,287 969.6,282.6 A9.1,9.1 0 1 1 982.4,282.6 C979.5,287 977,291 976,295.5 Z" fill="#f95700"/>
<circle cx="976" cy="276" r="4.8" fill="#fff"/>
<ellipse cx="909.9" cy="440.4" rx="4" ry="5.5" transform="rotate(40 909.9 440.4)" fill="#555" opacity="0.55" filter="url(#blur)"/>
<path d="M903.9,448.9 C902.9,444.4 900.4,440.4 897.5,436.0 A9.1,9.1 0 1 1 910.3,436.0 C907.4,440.4 904.9,444.4 903.9,448.9 Z" fill="#f95700"/>
<circle cx="903.9" cy="429.4" r="4.8" fill="#fff"/>
<ellipse cx="1076.9" cy="477.9" rx="4" ry="5.5" transform="rotate(40 1076.9 477.9)" fill="#555" opacity="0.55" filter="url(#blur)"/>
<path d="M1070.9,486.4 C1069.9,481.9 1067.4,477.9 1064.5,473.5 A9.1,9.1 0 1 1 1077.3000000000002,473.5 C1074.4,477.9 1071.9,481.9 1070.9,486.4 Z" fill="#f95700"/>
<circle cx="1070.9" cy="466.9" r="4.8" fill="#fff"/>
<text x="999.5" y="518.8" font-family="Liberation Sans" font-size="9.5" fill="#5f564a" stroke="#fff" stroke-width="1.6" paint-order="stroke" stroke-opacity="0.6">Pålstorp</text>
<text x="681" y="147.7" font-family="Liberation Sans" font-size="13.4" font-weight="bold" fill="#756a55" stroke="#fff" stroke-width="1.6" paint-order="stroke" stroke-opacity="0.5">Helsingborg</text><rect x="75" y="125.1" width="72.9" height="24.8" rx="2" fill="#fff" filter="url(#sh)"/>
<line x1="108.4" y1="125.1" x2="108.4" y2="149.9" stroke="#e6e6e6" stroke-width="1"/>
<text x="81" y="139.8" font-family="Liberation Sans" font-weight="bold" font-size="8.2" fill="#000">Karta</text>
<text x="114.8" y="139.8" font-family="Liberation Sans" font-size="9" fill="#565656">Satellit</text>
<rect x="1622.8" y="440.9" width="21.1" height="20.9" rx="2" fill="#fff" filter="url(#sh)"/>
<circle cx="1633.3" cy="445.8" r="1.9" fill="#f2b70c"/><path d="M1630.6,448.2 L1636,448.2 L1636.4,453 L1635.3,453 L1635.2,457.5 L1631.4,457.5 L1631.3,453 L1630.2,453 Z" fill="#f2b70c"/>
<rect x="1622.8" y="470.1" width="21.1" height="41" rx="2" fill="#fff" filter="url(#sh)"/>
<line x1="1626" y1="490.2" x2="1640.6" y2="490.2" stroke="#e6e6e6" stroke-width="0.8"/>
<path d="M1630.6,479.7 L1637.8,479.7 M1634.2,476.1 L1634.2,483.3" stroke="#666" stroke-width="1.7"/>
<path d="M1630.6,500.2 L1637.8,500.2" stroke="#666" stroke-width="1.7"/>
<rect x="1382.5" y="518.6" width="269" height="10.4" fill="#f5f5f5" opacity="0.7"/>
<text x="1386.7" y="527.6" font-family="Liberation Sans" font-size="8.9" fill="#444">Kartdata ©2016 Google</text>
<text x="1492" y="527.6" font-family="Liberation Sans" font-size="8.9" fill="#444">Användarvillkor</text>
<text x="1562.3" y="527.6" font-family="Liberation Sans" font-size="9" fill="#444">Rapportera ett kartfel</text>
<g font-family="Liberation Sans" font-size="15.5" stroke="#fff" stroke-width="1.5" paint-order="stroke" stroke-opacity="0.8"><text x="72" y="526"><tspan fill="#4285f4">G</tspan><tspan fill="#ea4335">o</tspan><tspan fill="#fbbc05">o</tspan><tspan fill="#4285f4">g</tspan><tspan fill="#34a853">l</tspan><tspan fill="#ea4335">e</tspan></text></g></g></svg></div>
<div id="table">
<div class="thead"><span class="c c1 h">Owner <b class="caret"></b></span><span class="c c2 h">Name</span><span class="c c3 h">Road identifier</span><span class="c c4 h">Newest measurement</span><span class="c c5 h">Daily traffic</span><span class="c c6 h">Average velocity</span><span class="c c7 h">Sensors <b class="caret"></b></span><span class="c c8 h st">Status</span></div>
<div class="tr" style="top:498.0px"><span class="cb"></span><span class="c c1">Helsingborgs kommun</span><span class="c c2">191010 - Malmöleden</span><span class="c c3">öster tpl Ättekulla</span><span class="c c4"><a>2007-11-19</a> (7 days)</span><span class="c c5">14 432</span><span class="c c6">95 km/h</span><span class="c c7">Golden River, Metor</span><span class="c c8"><i class="dot"></i><i class="dot"></i><i class="dot"></i><i class="dot"></i><i class="dot"></i></span></div><div class="tr" style="top:520.5px"><span class="cb"></span><span class="c c1">Helsingborgs kommun</span><span class="c c2">171410 - Furutorpsgatan</span><span class="c c3">öster S.Stenbocksgatan</span><span class="c c4"><a>2007-11-12</a> (7 days)</span><span class="c c5">5 688</span><span class="c c6">38 km/h</span><span class="c c7">Unknown, Metor</span><span class="c c8"><i class="dot"></i><i class="dot"></i><i class="dot"></i><i class="dot"></i><i class="dot"></i></span></div><div class="tr" style="top:543.0px"><span class="cb"></span><span class="c c1">Helsingborgs kommun</span><span class="c c2">120510 - Drottninggatan</span><span class="c c3">vid Sundstorget</span><span class="c c4"><a>2007-11-12</a> (7 days)</span><span class="c c5">19 344</span><span class="c c6">43 km/h</span><span class="c c7">Golden River, Metor</span><span class="c c8"><i class="dot"></i><i class="dot"></i><i class="dot"></i><i class="dot"></i><i class="dot"></i></span></div><div class="tr" style="top:565.5px"><span class="cb"></span><span class="c c1">Helsingborgs kommun</span><span class="c c2">173010 - Södra Hunnetorpsvägen</span><span class="c c3">vid Kyrkan</span><span class="c c4"><a>2007-11-12</a> (7 days)</span><span class="c c5">2 264</span><span class="c c6">39 km/h</span><span class="c c7">Unknown, Metor</span><span class="c c8"><i class="dot"></i><i class="dot"></i><i class="dot"></i><i class="dot"></i><i class="dot"></i></span></div><div class="tr" style="top:588.0px"><span class="cb"></span><span class="c c1">Helsingborgs kommun</span><span class="c c2">172810 - Sockengatan</span><span class="c c3">söder Januarigatan</span><span class="c c4"><a>2007-11-05</a> (7 days)</span><span class="c c5">4 704</span><span class="c c6">44 km/h</span><span class="c c7">Unknown, Metor</span><span class="c c8"><i class="dot"></i><i class="dot"></i><i class="dot"></i><i class="dot"></i><i class="dot"></i></span></div><div class="tr" style="top:610.5px"><span class="cb"></span><span class="c c1">Helsingborgs kommun</span><span class="c c2">172510 - Sockengatan</span><span class="c c3">norr Sofiebergsvägen</span><span class="c c4"><a>2007-11-05</a> (7 days)</span><span class="c c5">3 523</span><span class="c c6">50 km/h</span><span class="c c7">Unknown, Metor</span><span class="c c8"><i class="dot"></i><i class="dot"></i><i class="dot"></i><i class="dot"></i></span></div><div class="tr" style="top:633.0px"><span class="cb"></span><span class="c c1">Helsingborgs kommun</span><span class="c c2">171810 - Fältarpsvägen</span><span class="c c3">väster Sockengatan</span><span class="c c4"><a>2007-11-05</a> (7 days)</span><span class="c c5">7 195</span><span class="c c6">72 km/h</span><span class="c c7">Golden River, Unk...</span><span class="c c8"><i class="dot"></i><i class="dot"></i><i class="dot"></i><i class="dot"></i></span></div><div class="tr" style="top:655.5px"><span class="cb"></span><span class="c c1">Helsingborgs kommun</span><span class="c c2">151310 - Södra Stenbocksgatan</span><span class="c c3">vid Eneborgsplatsen</span><span class="c c4"><a>2007-11-05</a> (7 days)</span><span class="c c5">18 898</span><span class="c c6">48 km/h</span><span class="c c7">Unknown, Golden R...</span><span class="c c8"><i class="dot"></i><i class="dot"></i><i class="dot"></i><i class="dot"></i><i class="dot"></i><i class="dot"></i></span></div><div class="tr" style="top:678.0px"><span class="cb"></span><span class="c c1">Helsingborgs kommun</span><span class="c c2">171210 - Jönköpingsgatan</span><span class="c c3">söder Växjögatan</span><span class="c c4"><a>2007-11-05</a> (7 days)</span><span class="c c5">4 693</span><span class="c c6">42 km/h</span><span class="c c7">Unknown, Metor</span><span class="c c8"><i class="dot"></i><i class="dot"></i><i class="dot"></i><i class="dot"></i></span></div><div class="tr" style="top:700.5px"><span class="cb"></span><span class="c c1">Helsingborgs kommun</span><span class="c c2">812800 - Fältarpsvägen</span><span class="c c3">öster Södra Hunnetorpsvägen</span><span class="c c4"><a>2007-11-05</a> (7 days)</span><span class="c c5">9 059</span><span class="c c6">71 km/h</span><span class="c c7">Metor</span><span class="c c8"><i class="dot"></i><i class="dot"></i><i class="dot"></i><i class="dot"></i><i class="dot"></i></span></div><div class="tr" style="top:723.0px"><span class="cb"></span><span class="c c1">Helsingborgs kommun</span><span class="c c2">173110 - Ragnvallagatan</span><span class="c c3">söder Filbornavägen</span><span class="c c4"><a>2007-11-05</a> (7 days)</span><span class="c c5">3 517</span><span class="c c6">51 km/h</span><span class="c c7">Unknown, Metor</span><span class="c c8"><i class="dot"></i><i class="dot"></i><i class="dot"></i><i class="dot"></i></span></div><div class="tr" style="top:745.5px"><span class="cb"></span><span class="c c1">Helsingborgs kommun</span><span class="c c2">171110 - Jönköpingsgatan</span><span class="c c3">söder Örebrogatan</span><span class="c c4"><a>2007-11-05</a> (7 days)</span><span class="c c5">5 981</span><span class="c c6">42 km/h</span><span class="c c7">Unknown, Metor</span><span class="c c8"><i class="dot"></i><i class="dot"></i><i class="dot"></i><i class="dot"></i></span></div><div class="tr" style="top:768.0px"><span class="cb"></span><span class="c c1">Helsingborgs kommun</span><span class="c c2">173210 - Skånegatan</span><span class="c c3">öster S.Stenbocksg</span><span class="c c4"><a>2007-11-05</a> (7 days)</span><span class="c c5">2 338</span><span class="c c6">41 km/h</span><span class="c c7">Golden River, Unk...</span><span class="c c8"><i class="dot"></i><i class="dot"></i><i class="dot"></i><i class="dot"></i></span></div><div class="tr" style="top:790.5px"><span class="cb"></span><span class="c c1">Helsingborgs kommun</span><span class="c c2">172210 - Fältarpsvägen</span><span class="c c3">väster Österleden</span><span class="c c4"><a>2007-11-05</a> (7 days)</span><span class="c c5">9 937</span><span class="c c6">55 km/h</span><span class="c c7">Unknown, Metor</span><span class="c c8"><i class="dot"></i><i class="dot"></i><i class="dot"></i></span></div><div class="tr" style="top:813.0px"><span class="cb"></span><span class="c c1">Helsingborgs kommun</span><span class="c c2">172610 - Växjögatan</span><span class="c c3">väster Sockengatan</span><span class="c c4"><a>2007-11-05</a> (7 days)</span><span class="c c5">1 846</span><span class="c c6">42 km/h</span><span class="c c7">Unknown, Metor</span><span class="c c8"><i class="dot"></i><i class="dot"></i><i class="dot"></i></span></div><div class="tr" style="top:835.5px"><span class="cb"></span><span class="c c1">Helsingborgs kommun</span><span class="c c2">142710 - Florettgatan</span><span class="c c3">väster Bajonettgatan</span><span class="c c4"><a>2007-11-05</a> (7 days)</span><span class="c c5">2 489</span><span class="c c6">49 km/h</span><span class="c c7">Golden River, Unk...</span><span class="c c8"><i class="dot"></i><i class="dot"></i><i class="dot"></i><i class="dot"></i><i class="dot"></i></span></div><div class="tr" style="top:858.0px"><span class="cb"></span><span class="c c1">Helsingborgs kommun</span><span class="c c2">171310 - Jönköpingsgatan</span><span class="c c3">söder Ystadsgatan</span><span class="c c4"><a>2007-11-05</a> (7 days)</span><span class="c c5">2 653</span><span class="c c6">44 km/h</span><span class="c c7">Unknown, Golden R...</span><span class="c c8"><i class="dot"></i><i class="dot"></i><i class="dot"></i><i class="dot"></i></span></div><div class="tr" style="top:880.5px"><span class="cb"></span><span class="c c1">Helsingborgs kommun</span><span class="c c2">113010 - Kanongatan</span><span class="c c3">norr Karbingatan</span><span class="c c4"><a>2007-11-05</a> (7 days)</span><span class="c c5">6 690</span><span class="c c6">54 km/h</span><span class="c c7">Golden River, Metor</span><span class="c c8"><i class="dot"></i><i class="dot"></i><i class="dot"></i></span></div><div class="tr" style="top:903.0px"><span class="cb"></span><span class="c c1">Helsingborgs kommun</span><span class="c c2">140110 - Ängelholmsleden</span><span class="c c3">norr Berga Tlp</span><span class="c c4"><a>2007-11-05</a> (7 days)</span><span class="c c5">33 773</span><span class="c c6">99 km/h</span><span class="c c7">Metor</span><span class="c c8"><i class="dot"></i><i class="dot"></i><i class="dot"></i><i class="dot"></i></span></div><div class="tr" style="top:925.5px"><span class="cb"></span><span class="c c1">Helsingborgs kommun</span><span class="c c2">171510 - Furutorpsgatan</span><span class="c c3">öster Viskgatan</span><span class="c c4"><a>2007-11-05</a> (7 days)</span><span class="c c5">3 251</span><span class="c c6">41 km/h</span><span class="c c7">Unknown, Metor</span><span class="c c8"><i class="dot"></i><i class="dot"></i><i class="dot"></i><i class="dot"></i></span></div><div class="tr" style="top:948.0px"><span class="cb"></span><span class="c c1">Helsingborgs kommun</span><span class="c c2">121310 - Malmöleden</span><span class="c c3">norr Furutorpsgatan</span><span class="c c4"><a>2007-11-05</a> (7 days)</span><span class="c c5">18 998</span><span class="c c6">62 km/h</span><span class="c c7">Golden River, Unk...</span><span class="c c8"><i class="dot"></i><i class="dot"></i><i class="dot"></i><i class="dot"></i><i class="dot"></i><i class="dot"></i></span></div><div class="tr" style="top:970.5px"><span class="cb"></span><span class="c c1">Helsingborgs kommun</span><span class="c c2">172310 - Sockengatan</span><span class="c c3">norr Fältarpsvägen</span><span class="c c4"><a>2007-11-05</a> (7 days)</span><span class="c c5">4 642</span><span class="c c6">41 km/h</span><span class="c c7">Unknown, Metor</span><span class="c c8"><i class="dot"></i><i class="dot"></i><i class="dot"></i><i class="dot"></i></span></div><div class="tr" style="top:993.0px"><span class="cb"></span><span class="c c1">Helsingborgs kommun</span><span class="c c2">171610 - Fältarpsvägen</span><span class="c c3">väster Viskgatan</span><span class="c c4"><a>2007-11-05</a> (7 days)</span><span class="c c5">9 054</span><span class="c c6">63 km/h</span><span class="c c7">Unknown, Metor</span><span class="c c8"><i class="dot"></i><i class="dot"></i><i class="dot"></i><i class="dot"></i></span></div>
</div>
</div>
</div>
</body></html>
